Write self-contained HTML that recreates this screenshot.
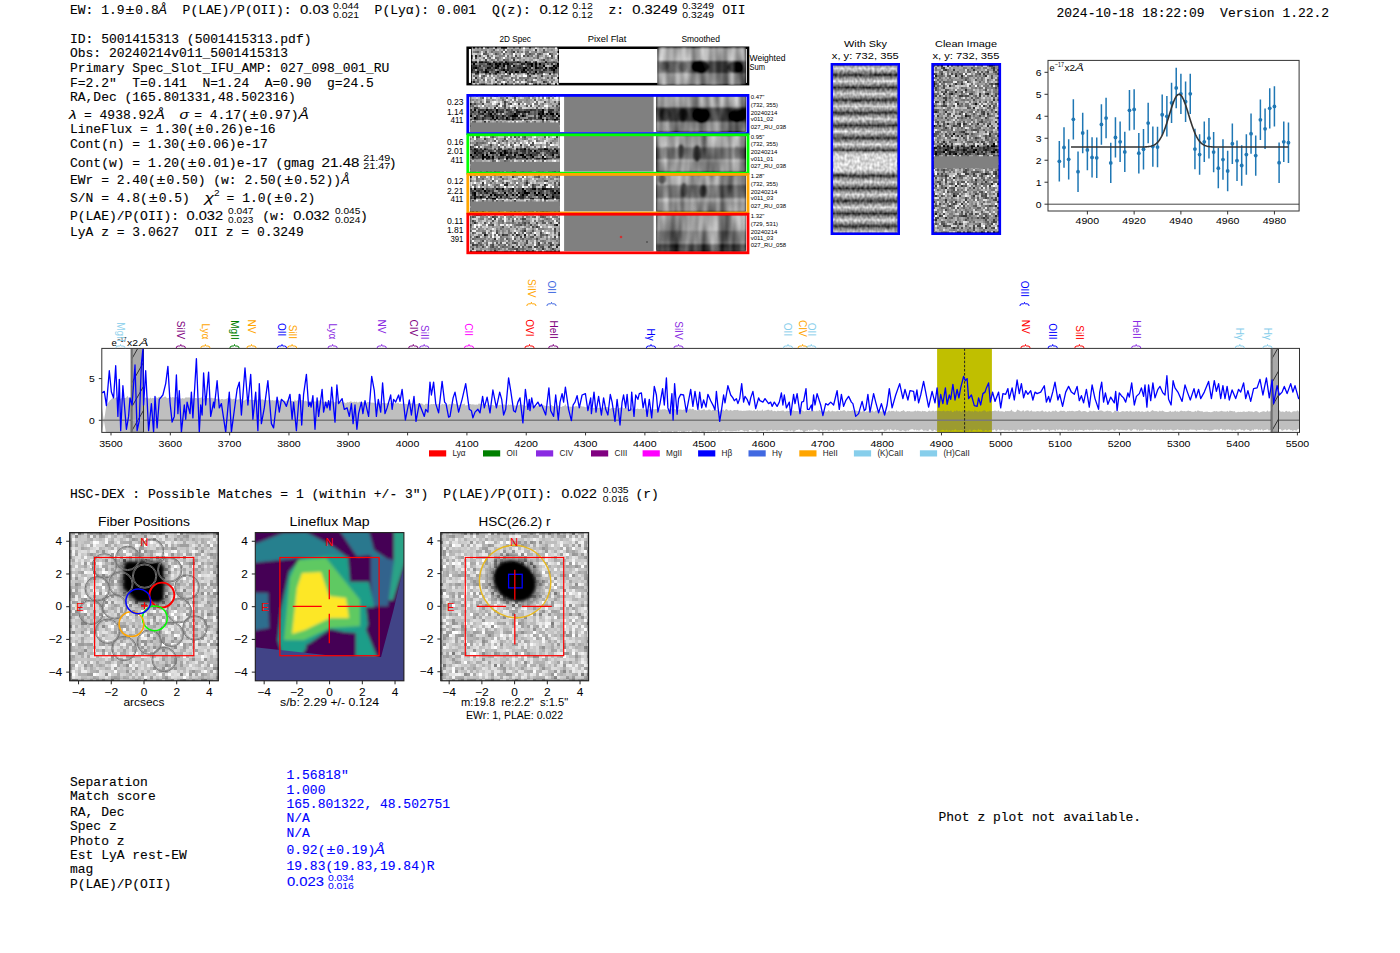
<!DOCTYPE html><html><head><meta charset="utf-8"><style>html,body{margin:0;padding:0;background:#fff;overflow:hidden}svg{display:block}text{white-space:pre}</style></head><body>
<svg width="1400" height="953" viewBox="0 0 1400 953">
<rect width="1400" height="953" fill="#fff"/>
<text x="70.00" y="14.10" font-family='"Liberation Mono", monospace' font-size="13.5" fill="#000" stroke="#000" stroke-width="0.12" textLength="54.53" lengthAdjust="spacingAndGlyphs" >EW: 1.9</text>
<text x="125.73" y="14.10" font-family='"Liberation Sans", sans-serif' font-size="13.5" fill="#000" text-anchor="start" textLength="8.44" lengthAdjust="spacingAndGlyphs" stroke="#000" stroke-width="0.10">±</text>
<text x="135.37" y="14.10" font-family='"Liberation Mono", monospace' font-size="13.5" fill="#000" stroke="#000" stroke-width="0.12" textLength="23.37" lengthAdjust="spacingAndGlyphs" >0.8</text>
<text x="158.20" y="14.10" font-family='"Liberation Sans", sans-serif' font-size="13.5" fill="#000" text-anchor="start" textLength="8.70" lengthAdjust="spacingAndGlyphs" font-style="italic" stroke="#000" stroke-width="0.10">Å</text>
<text x="182.60" y="14.10" font-family='"Liberation Mono", monospace' font-size="13.5" fill="#000" stroke="#000" stroke-width="0.12" textLength="109.06" lengthAdjust="spacingAndGlyphs" >P(LAE)/P(OII):</text>
<text x="300.10" y="14.10" font-family='"Liberation Sans", sans-serif' font-size="13.5" fill="#000" text-anchor="start" textLength="28.90" lengthAdjust="spacingAndGlyphs" stroke="#000" stroke-width="0.10">0.03</text>
<text x="333.00" y="8.70" font-family='"Liberation Sans", sans-serif' font-size="8.8" fill="#000" text-anchor="start" textLength="26.00" lengthAdjust="spacingAndGlyphs" >0.044</text>
<text x="333.00" y="17.50" font-family='"Liberation Sans", sans-serif' font-size="8.8" fill="#000" text-anchor="start" textLength="26.00" lengthAdjust="spacingAndGlyphs" >0.021</text>
<text x="374.60" y="14.10" font-family='"Liberation Mono", monospace' font-size="13.5" fill="#000" stroke="#000" stroke-width="0.12" textLength="54.53" lengthAdjust="spacingAndGlyphs" >P(Lyα):</text>
<text x="437.20" y="14.10" font-family='"Liberation Mono", monospace' font-size="13.5" fill="#000" stroke="#000" stroke-width="0.12" textLength="38.95" lengthAdjust="spacingAndGlyphs" >0.001</text>
<text x="491.90" y="14.10" font-family='"Liberation Mono", monospace' font-size="13.5" fill="#000" stroke="#000" stroke-width="0.12" textLength="38.95" lengthAdjust="spacingAndGlyphs" >Q(z):</text>
<text x="539.40" y="14.10" font-family='"Liberation Sans", sans-serif' font-size="13.5" fill="#000" text-anchor="start" textLength="28.90" lengthAdjust="spacingAndGlyphs" stroke="#000" stroke-width="0.10">0.12</text>
<text x="572.30" y="8.70" font-family='"Liberation Sans", sans-serif' font-size="8.8" fill="#000" text-anchor="start" textLength="20.50" lengthAdjust="spacingAndGlyphs" >0.12</text>
<text x="572.30" y="17.50" font-family='"Liberation Sans", sans-serif' font-size="8.8" fill="#000" text-anchor="start" textLength="20.50" lengthAdjust="spacingAndGlyphs" >0.12</text>
<text x="608.40" y="14.10" font-family='"Liberation Mono", monospace' font-size="13.5" fill="#000" stroke="#000" stroke-width="0.12" textLength="15.58" lengthAdjust="spacingAndGlyphs" >z:</text>
<text x="632.30" y="14.10" font-family='"Liberation Sans", sans-serif' font-size="13.5" fill="#000" text-anchor="start" textLength="45.20" lengthAdjust="spacingAndGlyphs" stroke="#000" stroke-width="0.10">0.3249</text>
<text x="682.30" y="8.70" font-family='"Liberation Sans", sans-serif' font-size="8.8" fill="#000" text-anchor="start" textLength="31.70" lengthAdjust="spacingAndGlyphs" >0.3249</text>
<text x="682.30" y="17.50" font-family='"Liberation Sans", sans-serif' font-size="8.8" fill="#000" text-anchor="start" textLength="31.70" lengthAdjust="spacingAndGlyphs" >0.3249</text>
<text x="722.20" y="14.10" font-family='"Liberation Mono", monospace' font-size="13.5" fill="#000" stroke="#000" stroke-width="0.12" textLength="23.37" lengthAdjust="spacingAndGlyphs" >OII</text>
<text x="1056.50" y="16.50" font-family='"Liberation Mono", monospace' font-size="13.5" fill="#000" stroke="#000" stroke-width="0.12" textLength="272.65" lengthAdjust="spacingAndGlyphs" >2024-10-18 18:22:09  Version 1.22.2</text>
<text x="70.00" y="42.60" font-family='"Liberation Mono", monospace' font-size="13.5" fill="#000" stroke="#000" stroke-width="0.12" textLength="241.49" lengthAdjust="spacingAndGlyphs" >ID: 5001415313 (5001415313.pdf)</text>
<text x="70.00" y="56.50" font-family='"Liberation Mono", monospace' font-size="13.5" fill="#000" stroke="#000" stroke-width="0.12" textLength="218.12" lengthAdjust="spacingAndGlyphs" >Obs: 20240214v011_5001415313</text>
<text x="70.00" y="71.60" font-family='"Liberation Mono", monospace' font-size="13.5" fill="#000" stroke="#000" stroke-width="0.12" textLength="319.39" lengthAdjust="spacingAndGlyphs" >Primary Spec_Slot_IFU_AMP: 027_098_001_RU</text>
<text x="70.00" y="86.70" font-family='"Liberation Mono", monospace' font-size="13.5" fill="#000" stroke="#000" stroke-width="0.12" textLength="303.81" lengthAdjust="spacingAndGlyphs" >F=2.2&quot;  T=0.141  N=1.24  A=0.90  g=24.5</text>
<text x="70.00" y="101.20" font-family='"Liberation Mono", monospace' font-size="13.5" fill="#000" stroke="#000" stroke-width="0.12" textLength="225.91" lengthAdjust="spacingAndGlyphs" >RA,Dec (165.801331,48.502316)</text>
<text x="69.00" y="118.80" font-family='"Liberation Sans", sans-serif' font-size="13.5" fill="#000" text-anchor="start" textLength="7.50" lengthAdjust="spacingAndGlyphs" font-style="italic" stroke="#000" stroke-width="0.10">λ</text>
<text x="76.20" y="118.80" font-family='"Liberation Mono", monospace' font-size="13.5" fill="#000" stroke="#000" stroke-width="0.12" textLength="77.90" lengthAdjust="spacingAndGlyphs" > = 4938.92</text>
<text x="154.40" y="118.80" font-family='"Liberation Sans", sans-serif' font-size="13.5" fill="#000" text-anchor="start" textLength="10.40" lengthAdjust="spacingAndGlyphs" font-style="italic" stroke="#000" stroke-width="0.10">Å</text>
<text x="179.50" y="118.80" font-family='"Liberation Sans", sans-serif' font-size="13.5" fill="#000" text-anchor="start" textLength="9.40" lengthAdjust="spacingAndGlyphs" font-style="italic" stroke="#000" stroke-width="0.10">σ</text>
<text x="186.40" y="118.80" font-family='"Liberation Mono", monospace' font-size="13.5" fill="#000" stroke="#000" stroke-width="0.12" textLength="62.32" lengthAdjust="spacingAndGlyphs" > = 4.17(</text>
<text x="249.92" y="118.80" font-family='"Liberation Sans", sans-serif' font-size="13.5" fill="#000" text-anchor="start" textLength="8.44" lengthAdjust="spacingAndGlyphs" stroke="#000" stroke-width="0.10">±</text>
<text x="259.56" y="118.80" font-family='"Liberation Mono", monospace' font-size="13.5" fill="#000" stroke="#000" stroke-width="0.12" textLength="38.95" lengthAdjust="spacingAndGlyphs" >0.97)</text>
<text x="298.40" y="118.80" font-family='"Liberation Sans", sans-serif' font-size="13.5" fill="#000" text-anchor="start" textLength="10.30" lengthAdjust="spacingAndGlyphs" font-style="italic" stroke="#000" stroke-width="0.10">Å</text>
<text x="70.00" y="133.40" font-family='"Liberation Mono", monospace' font-size="13.5" fill="#000" stroke="#000" stroke-width="0.12" textLength="124.64" lengthAdjust="spacingAndGlyphs" >LineFlux = 1.30(</text>
<text x="195.84" y="133.40" font-family='"Liberation Sans", sans-serif' font-size="13.5" fill="#000" text-anchor="start" textLength="8.44" lengthAdjust="spacingAndGlyphs" stroke="#000" stroke-width="0.10">±</text>
<text x="205.48" y="133.40" font-family='"Liberation Mono", monospace' font-size="13.5" fill="#000" stroke="#000" stroke-width="0.12" textLength="70.11" lengthAdjust="spacingAndGlyphs" >0.26)e-16</text>
<text x="70.00" y="148.20" font-family='"Liberation Mono", monospace' font-size="13.5" fill="#000" stroke="#000" stroke-width="0.12" textLength="116.85" lengthAdjust="spacingAndGlyphs" >Cont(n) = 1.30(</text>
<text x="188.05" y="148.20" font-family='"Liberation Sans", sans-serif' font-size="13.5" fill="#000" text-anchor="start" textLength="8.44" lengthAdjust="spacingAndGlyphs" stroke="#000" stroke-width="0.10">±</text>
<text x="197.69" y="148.20" font-family='"Liberation Mono", monospace' font-size="13.5" fill="#000" stroke="#000" stroke-width="0.12" textLength="70.11" lengthAdjust="spacingAndGlyphs" >0.06)e-17</text>
<text x="70.00" y="166.60" font-family='"Liberation Mono", monospace' font-size="13.5" fill="#000" stroke="#000" stroke-width="0.12" textLength="116.85" lengthAdjust="spacingAndGlyphs" >Cont(w) = 1.20(</text>
<text x="188.05" y="166.60" font-family='"Liberation Sans", sans-serif' font-size="13.5" fill="#000" text-anchor="start" textLength="8.44" lengthAdjust="spacingAndGlyphs" stroke="#000" stroke-width="0.10">±</text>
<text x="197.69" y="166.60" font-family='"Liberation Mono", monospace' font-size="13.5" fill="#000" stroke="#000" stroke-width="0.12" textLength="124.64" lengthAdjust="spacingAndGlyphs" >0.01)e-17 (gmag </text>
<text x="321.60" y="166.60" font-family='"Liberation Sans", sans-serif' font-size="13.5" fill="#000" text-anchor="start" textLength="37.90" lengthAdjust="spacingAndGlyphs" stroke="#000" stroke-width="0.10">21.48</text>
<text x="363.20" y="161.30" font-family='"Liberation Sans", sans-serif' font-size="8.8" fill="#000" text-anchor="start" textLength="27.00" lengthAdjust="spacingAndGlyphs" >21.49</text>
<text x="363.20" y="169.40" font-family='"Liberation Sans", sans-serif' font-size="8.8" fill="#000" text-anchor="start" textLength="27.00" lengthAdjust="spacingAndGlyphs" >21.47</text>
<text x="388.80" y="166.60" font-family='"Liberation Mono", monospace' font-size="13.5" fill="#000" stroke="#000" stroke-width="0.12" textLength="7.79" lengthAdjust="spacingAndGlyphs" >)</text>
<text x="70.00" y="184.30" font-family='"Liberation Mono", monospace' font-size="13.5" fill="#000" stroke="#000" stroke-width="0.12" textLength="85.69" lengthAdjust="spacingAndGlyphs" >EWr = 2.40(</text>
<text x="156.89" y="184.30" font-family='"Liberation Sans", sans-serif' font-size="13.5" fill="#000" text-anchor="start" textLength="8.44" lengthAdjust="spacingAndGlyphs" stroke="#000" stroke-width="0.10">±</text>
<text x="166.53" y="184.30" font-family='"Liberation Mono", monospace' font-size="13.5" fill="#000" stroke="#000" stroke-width="0.12" textLength="116.85" lengthAdjust="spacingAndGlyphs" >0.50) (w: 2.50(</text>
<text x="284.58" y="184.30" font-family='"Liberation Sans", sans-serif' font-size="13.5" fill="#000" text-anchor="start" textLength="8.44" lengthAdjust="spacingAndGlyphs" stroke="#000" stroke-width="0.10">±</text>
<text x="294.22" y="184.30" font-family='"Liberation Mono", monospace' font-size="13.5" fill="#000" stroke="#000" stroke-width="0.12" textLength="46.74" lengthAdjust="spacingAndGlyphs" >0.52))</text>
<text x="341.20" y="184.30" font-family='"Liberation Sans", sans-serif' font-size="13.5" fill="#000" text-anchor="start" textLength="8.40" lengthAdjust="spacingAndGlyphs" font-style="italic" stroke="#000" stroke-width="0.10">Å</text>
<text x="70.00" y="202.00" font-family='"Liberation Mono", monospace' font-size="13.5" fill="#000" stroke="#000" stroke-width="0.12" textLength="77.90" lengthAdjust="spacingAndGlyphs" >S/N = 4.8(</text>
<text x="149.10" y="202.00" font-family='"Liberation Sans", sans-serif' font-size="13.5" fill="#000" text-anchor="start" textLength="8.44" lengthAdjust="spacingAndGlyphs" stroke="#000" stroke-width="0.10">±</text>
<text x="158.74" y="202.00" font-family='"Liberation Mono", monospace' font-size="13.5" fill="#000" stroke="#000" stroke-width="0.12" textLength="46.74" lengthAdjust="spacingAndGlyphs" >0.5)  </text>
<text x="204.60" y="202.00" font-family='"Liberation Sans", sans-serif' font-size="13.5" fill="#000" text-anchor="start" textLength="9.40" lengthAdjust="spacingAndGlyphs" font-style="italic" stroke="#000" stroke-width="0.10">χ</text>
<text x="213.90" y="196.00" font-family='"Liberation Sans", sans-serif' font-size="8.8" fill="#000" text-anchor="start" textLength="5.60" lengthAdjust="spacingAndGlyphs" >2</text>
<text x="218.80" y="202.00" font-family='"Liberation Mono", monospace' font-size="13.5" fill="#000" stroke="#000" stroke-width="0.12" textLength="54.53" lengthAdjust="spacingAndGlyphs" > = 1.0(</text>
<text x="274.53" y="202.00" font-family='"Liberation Sans", sans-serif' font-size="13.5" fill="#000" text-anchor="start" textLength="8.44" lengthAdjust="spacingAndGlyphs" stroke="#000" stroke-width="0.10">±</text>
<text x="284.17" y="202.00" font-family='"Liberation Mono", monospace' font-size="13.5" fill="#000" stroke="#000" stroke-width="0.12" textLength="31.16" lengthAdjust="spacingAndGlyphs" >0.2)</text>
<text x="70.00" y="219.70" font-family='"Liberation Mono", monospace' font-size="13.5" fill="#000" stroke="#000" stroke-width="0.12" textLength="116.85" lengthAdjust="spacingAndGlyphs" >P(LAE)/P(OII): </text>
<text x="186.50" y="219.70" font-family='"Liberation Sans", sans-serif' font-size="13.5" fill="#000" text-anchor="start" textLength="36.60" lengthAdjust="spacingAndGlyphs" stroke="#000" stroke-width="0.10">0.032</text>
<text x="228.10" y="214.40" font-family='"Liberation Sans", sans-serif' font-size="8.8" fill="#000" text-anchor="start" textLength="25.40" lengthAdjust="spacingAndGlyphs" >0.047</text>
<text x="228.10" y="223.00" font-family='"Liberation Sans", sans-serif' font-size="8.8" fill="#000" text-anchor="start" textLength="25.40" lengthAdjust="spacingAndGlyphs" >0.023</text>
<text x="262.30" y="219.70" font-family='"Liberation Mono", monospace' font-size="13.5" fill="#000" stroke="#000" stroke-width="0.12" textLength="31.16" lengthAdjust="spacingAndGlyphs" >(w: </text>
<text x="293.30" y="219.70" font-family='"Liberation Sans", sans-serif' font-size="13.5" fill="#000" text-anchor="start" textLength="36.40" lengthAdjust="spacingAndGlyphs" stroke="#000" stroke-width="0.10">0.032</text>
<text x="335.00" y="214.40" font-family='"Liberation Sans", sans-serif' font-size="8.8" fill="#000" text-anchor="start" textLength="25.30" lengthAdjust="spacingAndGlyphs" >0.045</text>
<text x="335.00" y="223.00" font-family='"Liberation Sans", sans-serif' font-size="8.8" fill="#000" text-anchor="start" textLength="25.30" lengthAdjust="spacingAndGlyphs" >0.024</text>
<text x="360.00" y="219.70" font-family='"Liberation Mono", monospace' font-size="13.5" fill="#000" stroke="#000" stroke-width="0.12" textLength="7.79" lengthAdjust="spacingAndGlyphs" >)</text>
<text x="70.00" y="236.00" font-family='"Liberation Mono", monospace' font-size="13.5" fill="#000" stroke="#000" stroke-width="0.12" textLength="233.70" lengthAdjust="spacingAndGlyphs" >LyA z = 3.0627  OII z = 0.3249</text>
<text x="70.00" y="498.40" font-family='"Liberation Mono", monospace' font-size="13.5" fill="#000" stroke="#000" stroke-width="0.12" textLength="358.34" lengthAdjust="spacingAndGlyphs" >HSC-DEX : Possible Matches = 1 (within +/- 3&quot;)</text>
<text x="443.30" y="498.40" font-family='"Liberation Mono", monospace' font-size="13.5" fill="#000" stroke="#000" stroke-width="0.12" textLength="109.06" lengthAdjust="spacingAndGlyphs" >P(LAE)/P(OII):</text>
<text x="561.60" y="498.40" font-family='"Liberation Sans", sans-serif' font-size="13.5" fill="#000" text-anchor="start" textLength="35.10" lengthAdjust="spacingAndGlyphs" stroke="#000" stroke-width="0.10">0.022</text>
<text x="602.80" y="493.20" font-family='"Liberation Sans", sans-serif' font-size="8.8" fill="#000" text-anchor="start" textLength="25.80" lengthAdjust="spacingAndGlyphs" >0.035</text>
<text x="602.80" y="501.60" font-family='"Liberation Sans", sans-serif' font-size="8.8" fill="#000" text-anchor="start" textLength="25.80" lengthAdjust="spacingAndGlyphs" >0.016</text>
<text x="635.40" y="498.40" font-family='"Liberation Mono", monospace' font-size="13.5" fill="#000" stroke="#000" stroke-width="0.12" textLength="23.37" lengthAdjust="spacingAndGlyphs" >(r)</text>
<text x="70.00" y="785.70" font-family='"Liberation Mono", monospace' font-size="13.5" fill="#000" stroke="#000" stroke-width="0.12" textLength="77.90" lengthAdjust="spacingAndGlyphs" >Separation</text>
<text x="70.00" y="800.40" font-family='"Liberation Mono", monospace' font-size="13.5" fill="#000" stroke="#000" stroke-width="0.12" textLength="85.69" lengthAdjust="spacingAndGlyphs" >Match score</text>
<text x="70.00" y="815.50" font-family='"Liberation Mono", monospace' font-size="13.5" fill="#000" stroke="#000" stroke-width="0.12" textLength="54.53" lengthAdjust="spacingAndGlyphs" >RA, Dec</text>
<text x="70.00" y="829.80" font-family='"Liberation Mono", monospace' font-size="13.5" fill="#000" stroke="#000" stroke-width="0.12" textLength="46.74" lengthAdjust="spacingAndGlyphs" >Spec z</text>
<text x="70.00" y="844.50" font-family='"Liberation Mono", monospace' font-size="13.5" fill="#000" stroke="#000" stroke-width="0.12" textLength="54.53" lengthAdjust="spacingAndGlyphs" >Photo z</text>
<text x="70.00" y="858.70" font-family='"Liberation Mono", monospace' font-size="13.5" fill="#000" stroke="#000" stroke-width="0.12" textLength="116.85" lengthAdjust="spacingAndGlyphs" >Est LyA rest-EW</text>
<text x="70.00" y="873.10" font-family='"Liberation Mono", monospace' font-size="13.5" fill="#000" stroke="#000" stroke-width="0.12" textLength="23.37" lengthAdjust="spacingAndGlyphs" >mag</text>
<text x="70.00" y="887.80" font-family='"Liberation Mono", monospace' font-size="13.5" fill="#000" stroke="#000" stroke-width="0.12" textLength="101.27" lengthAdjust="spacingAndGlyphs" >P(LAE)/P(OII)</text>
<text x="286.50" y="779.10" font-family='"Liberation Mono", monospace' font-size="13.5" fill="#0000ff" stroke="#0000ff" stroke-width="0.12" textLength="62.32" lengthAdjust="spacingAndGlyphs" >1.56818&quot;</text>
<text x="286.50" y="793.50" font-family='"Liberation Mono", monospace' font-size="13.5" fill="#0000ff" stroke="#0000ff" stroke-width="0.12" textLength="38.95" lengthAdjust="spacingAndGlyphs" >1.000</text>
<text x="286.50" y="808.20" font-family='"Liberation Mono", monospace' font-size="13.5" fill="#0000ff" stroke="#0000ff" stroke-width="0.12" textLength="163.59" lengthAdjust="spacingAndGlyphs" >165.801322, 48.502751</text>
<text x="286.50" y="822.40" font-family='"Liberation Mono", monospace' font-size="13.5" fill="#0000ff" stroke="#0000ff" stroke-width="0.12" textLength="23.37" lengthAdjust="spacingAndGlyphs" >N/A</text>
<text x="286.50" y="837.40" font-family='"Liberation Mono", monospace' font-size="13.5" fill="#0000ff" stroke="#0000ff" stroke-width="0.12" textLength="23.37" lengthAdjust="spacingAndGlyphs" >N/A</text>
<text x="286.50" y="869.50" font-family='"Liberation Mono", monospace' font-size="13.5" fill="#0000ff" stroke="#0000ff" stroke-width="0.12" textLength="148.01" lengthAdjust="spacingAndGlyphs" >19.83(19.83,19.84)R</text>
<text x="286.50" y="854.00" font-family='"Liberation Mono", monospace' font-size="13.5" fill="#0000ff" stroke="#0000ff" stroke-width="0.12" textLength="38.95" lengthAdjust="spacingAndGlyphs" >0.92(</text>
<text x="326.65" y="854.00" font-family='"Liberation Sans", sans-serif' font-size="13.5" fill="#0000ff" text-anchor="start" textLength="8.44" lengthAdjust="spacingAndGlyphs" stroke="#0000ff" stroke-width="0.10">±</text>
<text x="336.29" y="854.00" font-family='"Liberation Mono", monospace' font-size="13.5" fill="#0000ff" stroke="#0000ff" stroke-width="0.12" textLength="38.95" lengthAdjust="spacingAndGlyphs" >0.19)</text>
<text x="374.40" y="854.00" font-family='"Liberation Sans", sans-serif' font-size="13.5" fill="#0000ff" text-anchor="start" textLength="10.50" lengthAdjust="spacingAndGlyphs" font-style="italic" stroke="#0000ff" stroke-width="0.10">Å</text>
<text x="286.90" y="886.40" font-family='"Liberation Sans", sans-serif' font-size="13.5" fill="#0000ff" text-anchor="start" textLength="37.00" lengthAdjust="spacingAndGlyphs" stroke="#0000ff" stroke-width="0.10">0.023</text>
<text x="327.90" y="880.50" font-family='"Liberation Sans", sans-serif' font-size="8.8" fill="#0000ff" text-anchor="start" textLength="26.00" lengthAdjust="spacingAndGlyphs" >0.034</text>
<text x="327.90" y="889.00" font-family='"Liberation Sans", sans-serif' font-size="8.8" fill="#0000ff" text-anchor="start" textLength="26.00" lengthAdjust="spacingAndGlyphs" >0.016</text>
<text x="938.50" y="821.00" font-family='"Liberation Mono", monospace' font-size="13.5" fill="#000" stroke="#000" stroke-width="0.12" textLength="202.54" lengthAdjust="spacingAndGlyphs" >Phot z plot not available.</text>
<defs>
<filter id="fw2d" filterUnits="userSpaceOnUse" x="471.9" y="47.5" width="86.4" height="37" color-interpolation-filters="sRGB"><feOffset in="SourceGraphic" dx="0" dy="0" result="s"/><feTurbulence type="fractalNoise" baseFrequency="0.9" numOctaves="1" seed="3" result="t"/><feColorMatrix in="t" type="matrix" values="1 0 0 0 0  1 0 0 0 0  1 0 0 0 0  0 0 0 0 1" result="g"/><feFlood x="471" y="47" width="1" height="1" flood-color="#000" result="f"/><feComposite in="f" in2="f" operator="over" x="471" y="47" width="2" height="2" result="fc"/><feTile in="fc" result="tile"/><feComposite in="g" in2="tile" operator="in" result="samp"/><feConvolveMatrix in="samp" order="2" kernelMatrix="1 1 1 1" divisor="1" targetX="1" targetY="1" edgeMode="none" result="blk"/><feComposite in="s" in2="blk" operator="arithmetic" k1="0" k2="1" k3="1.8" k4="-0.900"/></filter>
<filter id="fwsm" filterUnits="userSpaceOnUse" x="657.9" y="47.5" width="87.8" height="37" color-interpolation-filters="sRGB"><feGaussianBlur in="SourceGraphic" stdDeviation="1.2" result="s"/><feTurbulence type="fractalNoise" baseFrequency="0.1 0.02" numOctaves="2" seed="5" result="t"/><feColorMatrix in="t" type="matrix" values="1 0 0 0 0  1 0 0 0 0  1 0 0 0 0  0 0 0 0 1" result="g"/><feComposite in="s" in2="g" operator="arithmetic" k1="0" k2="1" k3="0.75" k4="-0.375"/></filter>
<filter id="f2d0" filterUnits="userSpaceOnUse" x="470.3" y="95.4" width="89.5" height="36.60000000000001" color-interpolation-filters="sRGB"><feOffset in="SourceGraphic" dx="0" dy="0" result="s"/><feTurbulence type="fractalNoise" baseFrequency="0.9" numOctaves="1" seed="11" result="t"/><feColorMatrix in="t" type="matrix" values="1 0 0 0 0  1 0 0 0 0  1 0 0 0 0  0 0 0 0 1" result="g"/><feFlood x="470" y="95" width="1" height="1" flood-color="#000" result="f"/><feComposite in="f" in2="f" operator="over" x="470" y="95" width="2" height="2" result="fc"/><feTile in="fc" result="tile"/><feComposite in="g" in2="tile" operator="in" result="samp"/><feConvolveMatrix in="samp" order="2" kernelMatrix="1 1 1 1" divisor="1" targetX="1" targetY="1" edgeMode="none" result="blk"/><feComposite in="s" in2="blk" operator="arithmetic" k1="0" k2="1" k3="1.8" k4="-0.900"/></filter>
<filter id="fsm0" filterUnits="userSpaceOnUse" x="656.4" y="95.4" width="89.6" height="36.60000000000001" color-interpolation-filters="sRGB"><feGaussianBlur in="SourceGraphic" stdDeviation="1.2" result="s"/><feTurbulence type="fractalNoise" baseFrequency="0.1 0.02" numOctaves="2" seed="21" result="t"/><feColorMatrix in="t" type="matrix" values="1 0 0 0 0  1 0 0 0 0  1 0 0 0 0  0 0 0 0 1" result="g"/><feComposite in="s" in2="g" operator="arithmetic" k1="0" k2="1" k3="0.8" k4="-0.400"/></filter>
<filter id="f2d1" filterUnits="userSpaceOnUse" x="470.3" y="134.8" width="89.5" height="36.8" color-interpolation-filters="sRGB"><feOffset in="SourceGraphic" dx="0" dy="0" result="s"/><feTurbulence type="fractalNoise" baseFrequency="0.9" numOctaves="1" seed="12" result="t"/><feColorMatrix in="t" type="matrix" values="1 0 0 0 0  1 0 0 0 0  1 0 0 0 0  0 0 0 0 1" result="g"/><feFlood x="470" y="134" width="1" height="1" flood-color="#000" result="f"/><feComposite in="f" in2="f" operator="over" x="470" y="134" width="2" height="2" result="fc"/><feTile in="fc" result="tile"/><feComposite in="g" in2="tile" operator="in" result="samp"/><feConvolveMatrix in="samp" order="2" kernelMatrix="1 1 1 1" divisor="1" targetX="1" targetY="1" edgeMode="none" result="blk"/><feComposite in="s" in2="blk" operator="arithmetic" k1="0" k2="1" k3="1.8" k4="-0.900"/></filter>
<filter id="fsm1" filterUnits="userSpaceOnUse" x="656.4" y="134.8" width="89.6" height="36.8" color-interpolation-filters="sRGB"><feGaussianBlur in="SourceGraphic" stdDeviation="1.2" result="s"/><feTurbulence type="fractalNoise" baseFrequency="0.1 0.02" numOctaves="2" seed="22" result="t"/><feColorMatrix in="t" type="matrix" values="1 0 0 0 0  1 0 0 0 0  1 0 0 0 0  0 0 0 0 1" result="g"/><feComposite in="s" in2="g" operator="arithmetic" k1="0" k2="1" k3="0.8" k4="-0.400"/></filter>
<filter id="f2d2" filterUnits="userSpaceOnUse" x="470.3" y="174.4" width="89.5" height="37.000000000000014" color-interpolation-filters="sRGB"><feOffset in="SourceGraphic" dx="0" dy="0" result="s"/><feTurbulence type="fractalNoise" baseFrequency="0.9" numOctaves="1" seed="13" result="t"/><feColorMatrix in="t" type="matrix" values="1 0 0 0 0  1 0 0 0 0  1 0 0 0 0  0 0 0 0 1" result="g"/><feFlood x="470" y="174" width="1" height="1" flood-color="#000" result="f"/><feComposite in="f" in2="f" operator="over" x="470" y="174" width="2" height="2" result="fc"/><feTile in="fc" result="tile"/><feComposite in="g" in2="tile" operator="in" result="samp"/><feConvolveMatrix in="samp" order="2" kernelMatrix="1 1 1 1" divisor="1" targetX="1" targetY="1" edgeMode="none" result="blk"/><feComposite in="s" in2="blk" operator="arithmetic" k1="0" k2="1" k3="1.8" k4="-0.900"/></filter>
<filter id="fsm2" filterUnits="userSpaceOnUse" x="656.4" y="174.4" width="89.6" height="37.000000000000014" color-interpolation-filters="sRGB"><feGaussianBlur in="SourceGraphic" stdDeviation="1.2" result="s"/><feTurbulence type="fractalNoise" baseFrequency="0.1 0.02" numOctaves="2" seed="23" result="t"/><feColorMatrix in="t" type="matrix" values="1 0 0 0 0  1 0 0 0 0  1 0 0 0 0  0 0 0 0 1" result="g"/><feComposite in="s" in2="g" operator="arithmetic" k1="0" k2="1" k3="0.8" k4="-0.400"/></filter>
<filter id="f2d3" filterUnits="userSpaceOnUse" x="470.3" y="214.20000000000002" width="89.5" height="36.999999999999986" color-interpolation-filters="sRGB"><feOffset in="SourceGraphic" dx="0" dy="0" result="s"/><feTurbulence type="fractalNoise" baseFrequency="0.9" numOctaves="1" seed="14" result="t"/><feColorMatrix in="t" type="matrix" values="1 0 0 0 0  1 0 0 0 0  1 0 0 0 0  0 0 0 0 1" result="g"/><feFlood x="470" y="214" width="1" height="1" flood-color="#000" result="f"/><feComposite in="f" in2="f" operator="over" x="470" y="214" width="2" height="2" result="fc"/><feTile in="fc" result="tile"/><feComposite in="g" in2="tile" operator="in" result="samp"/><feConvolveMatrix in="samp" order="2" kernelMatrix="1 1 1 1" divisor="1" targetX="1" targetY="1" edgeMode="none" result="blk"/><feComposite in="s" in2="blk" operator="arithmetic" k1="0" k2="1" k3="1.8" k4="-0.900"/></filter>
<filter id="fsm3" filterUnits="userSpaceOnUse" x="656.4" y="214.20000000000002" width="89.6" height="36.999999999999986" color-interpolation-filters="sRGB"><feGaussianBlur in="SourceGraphic" stdDeviation="1.2" result="s"/><feTurbulence type="fractalNoise" baseFrequency="0.1 0.02" numOctaves="2" seed="24" result="t"/><feColorMatrix in="t" type="matrix" values="1 0 0 0 0  1 0 0 0 0  1 0 0 0 0  0 0 0 0 1" result="g"/><feComposite in="s" in2="g" operator="arithmetic" k1="0" k2="1" k3="0.8" k4="-0.400"/></filter>
</defs>
<text x="515.20" y="41.80" font-family='"Liberation Sans", sans-serif' font-size="8.6" fill="#000" text-anchor="middle" textLength="31.50" lengthAdjust="spacingAndGlyphs" >2D Spec</text>
<text x="607.00" y="41.80" font-family='"Liberation Sans", sans-serif' font-size="8.6" fill="#000" text-anchor="middle" textLength="38.50" lengthAdjust="spacingAndGlyphs" >Pixel Flat</text>
<text x="700.70" y="41.80" font-family='"Liberation Sans", sans-serif' font-size="8.6" fill="#000" text-anchor="middle" textLength="38.50" lengthAdjust="spacingAndGlyphs" >Smoothed</text>
<rect x="467.65" y="47.75" width="280.4" height="36.4" fill="#fff" stroke="#000" stroke-width="2.5"/>
<g filter="url(#fw2d)"><rect x="471.9" y="47.5" width="86.4" height="37" fill="#9a9a9a"/><rect x="471.9" y="61.5" width="86.4" height="12" fill="#4a4a4a"/></g>
<g filter="url(#fwsm)"><rect x="657.9" y="47.5" width="87.8" height="37" fill="#a8a8a8"/><rect x="657.9" y="70" width="87.8" height="15" fill="#8a8a8a"/><rect x="657.9" y="61" width="87.8" height="12" fill="#505050"/><ellipse cx="700.5" cy="66.8" rx="8.5" ry="6" fill="#000"/><ellipse cx="735" cy="67" rx="7.5" ry="5.5" fill="#111"/><ellipse cx="664" cy="66" rx="5" ry="4.5" fill="#333"/><ellipse cx="683" cy="67" rx="4.5" ry="4.5" fill="#333"/></g>
<text x="749.50" y="61.40" font-family='"Liberation Sans", sans-serif' font-size="9.2" fill="#000" text-anchor="start" textLength="36.00" lengthAdjust="spacingAndGlyphs" >Weighted</text>
<text x="749.50" y="70.30" font-family='"Liberation Sans", sans-serif' font-size="9.2" fill="#000" text-anchor="start" textLength="15.50" lengthAdjust="spacingAndGlyphs" >Sum</text>
<g filter="url(#f2d0)"><rect x="470.3" y="95.4" width="89.5" height="36.60000000000001" fill="#a2a2a2"/><rect x="470.3" y="109.0" width="89.5" height="11" fill="#484848"/></g>
<rect x="470.3" y="122.5" width="89.5" height="9.500000000000005" fill="#808080"/>
<rect x="564.1" y="95.4" width="89.5" height="36.60000000000001" fill="#808080"/>
<g filter="url(#fsm0)"><rect x="656.4" y="95.4" width="89.6" height="36.6" fill="#a0a0a0"/><rect x="656.4" y="121" width="89.6" height="11" fill="#858585"/><rect x="656.4" y="107.5" width="89.6" height="14" fill="#404040"/><ellipse cx="701.5" cy="115.5" rx="8.5" ry="7" fill="#000"/><ellipse cx="737" cy="115.5" rx="7.5" ry="6" fill="#000"/><ellipse cx="665" cy="114.5" rx="5.5" ry="6.5" fill="#222"/><ellipse cx="683" cy="115" rx="5" ry="6.5" fill="#222"/></g>
<rect x="467.8" y="95.40" width="280.2" height="38.20" fill="none" stroke="#0000ff" stroke-width="2.8"/>
<text x="463.40" y="105.40" font-family='"Liberation Sans", sans-serif' font-size="8.6" fill="#000" text-anchor="end" textLength="16.50" lengthAdjust="spacingAndGlyphs" >0.23</text>
<text x="463.40" y="114.60" font-family='"Liberation Sans", sans-serif' font-size="8.6" fill="#000" text-anchor="end" textLength="16.50" lengthAdjust="spacingAndGlyphs" >1.14</text>
<text x="463.40" y="123.20" font-family='"Liberation Sans", sans-serif' font-size="8.6" fill="#000" text-anchor="end" textLength="13.00" lengthAdjust="spacingAndGlyphs" >411</text>
<text x="750.70" y="99.30" font-family='"Liberation Sans", sans-serif' font-size="6.0" fill="#000" text-anchor="start" >0.47&quot;</text>
<text x="750.70" y="107.00" font-family='"Liberation Sans", sans-serif' font-size="6.0" fill="#000" text-anchor="start" >(732, 355)</text>
<text x="750.70" y="115.00" font-family='"Liberation Sans", sans-serif' font-size="6.0" fill="#000" text-anchor="start" >20240214</text>
<text x="750.70" y="121.40" font-family='"Liberation Sans", sans-serif' font-size="6.0" fill="#000" text-anchor="start" >v011_02</text>
<text x="750.70" y="128.60" font-family='"Liberation Sans", sans-serif' font-size="6.0" fill="#000" text-anchor="start" >027_RU_038</text>
<g filter="url(#f2d1)"><rect x="470.3" y="134.8" width="89.5" height="36.8" fill="#a2a2a2"/><rect x="470.3" y="148.4" width="89.5" height="11" fill="#484848"/></g>
<rect x="470.3" y="161.9" width="89.5" height="9.699999999999994" fill="#808080"/>
<rect x="564.1" y="134.8" width="89.5" height="36.8" fill="#808080"/>
<g filter="url(#fsm1)"><rect x="656.4" y="134.8" width="89.6" height="36.8" fill="#a0a0a0"/><rect x="656.4" y="161.4" width="89.6" height="10.599999999999994" fill="#858585"/><rect x="656.4" y="147.4" width="89.6" height="12" fill="#6a6a6a"/><ellipse cx="697" cy="153.4" rx="4" ry="8" fill="#333"/><ellipse cx="681" cy="151.4" rx="3.5" ry="7" fill="#444"/><ellipse cx="666" cy="152.4" rx="3" ry="6" fill="#555"/><ellipse cx="737" cy="152.4" rx="3" ry="6" fill="#555"/></g>
<rect x="467.8" y="134.80" width="280.2" height="38.40" fill="none" stroke="#00ff00" stroke-width="2.8"/>
<text x="463.40" y="144.80" font-family='"Liberation Sans", sans-serif' font-size="8.6" fill="#000" text-anchor="end" textLength="16.50" lengthAdjust="spacingAndGlyphs" >0.16</text>
<text x="463.40" y="154.00" font-family='"Liberation Sans", sans-serif' font-size="8.6" fill="#000" text-anchor="end" textLength="16.50" lengthAdjust="spacingAndGlyphs" >2.01</text>
<text x="463.40" y="162.60" font-family='"Liberation Sans", sans-serif' font-size="8.6" fill="#000" text-anchor="end" textLength="13.00" lengthAdjust="spacingAndGlyphs" >411</text>
<text x="750.70" y="138.70" font-family='"Liberation Sans", sans-serif' font-size="6.0" fill="#000" text-anchor="start" >0.95&quot;</text>
<text x="750.70" y="146.40" font-family='"Liberation Sans", sans-serif' font-size="6.0" fill="#000" text-anchor="start" >(732, 355)</text>
<text x="750.70" y="154.40" font-family='"Liberation Sans", sans-serif' font-size="6.0" fill="#000" text-anchor="start" >20240214</text>
<text x="750.70" y="160.80" font-family='"Liberation Sans", sans-serif' font-size="6.0" fill="#000" text-anchor="start" >v011_01</text>
<text x="750.70" y="168.00" font-family='"Liberation Sans", sans-serif' font-size="6.0" fill="#000" text-anchor="start" >027_RU_038</text>
<g filter="url(#f2d2)"><rect x="470.3" y="174.4" width="89.5" height="37.000000000000014" fill="#a2a2a2"/><rect x="470.3" y="188.0" width="89.5" height="11" fill="#484848"/></g>
<rect x="470.3" y="201.5" width="89.5" height="9.900000000000011" fill="#808080"/>
<rect x="564.1" y="174.4" width="89.5" height="37.000000000000014" fill="#808080"/>
<g filter="url(#fsm2)"><rect x="656.4" y="174.4" width="89.6" height="37.000000000000014" fill="#9c9c9c"/><rect x="656.4" y="202.0" width="89.6" height="9.800000000000011" fill="#868686"/><rect x="656.4" y="185.0" width="89.6" height="13" fill="#6a6a6a"/><ellipse cx="662" cy="179.0" rx="4" ry="5" fill="#444"/><ellipse cx="684" cy="190.0" rx="3.5" ry="7" fill="#444"/><ellipse cx="703" cy="191.0" rx="4" ry="6" fill="#3a3a3a"/></g>
<rect x="467.8" y="174.40" width="280.2" height="38.60" fill="none" stroke="#ffa500" stroke-width="2.8"/>
<text x="463.40" y="184.40" font-family='"Liberation Sans", sans-serif' font-size="8.6" fill="#000" text-anchor="end" textLength="16.50" lengthAdjust="spacingAndGlyphs" >0.12</text>
<text x="463.40" y="193.60" font-family='"Liberation Sans", sans-serif' font-size="8.6" fill="#000" text-anchor="end" textLength="16.50" lengthAdjust="spacingAndGlyphs" >2.21</text>
<text x="463.40" y="202.20" font-family='"Liberation Sans", sans-serif' font-size="8.6" fill="#000" text-anchor="end" textLength="13.00" lengthAdjust="spacingAndGlyphs" >411</text>
<text x="750.70" y="178.30" font-family='"Liberation Sans", sans-serif' font-size="6.0" fill="#000" text-anchor="start" >1.28&quot;</text>
<text x="750.70" y="186.00" font-family='"Liberation Sans", sans-serif' font-size="6.0" fill="#000" text-anchor="start" >(732, 355)</text>
<text x="750.70" y="194.00" font-family='"Liberation Sans", sans-serif' font-size="6.0" fill="#000" text-anchor="start" >20240214</text>
<text x="750.70" y="200.40" font-family='"Liberation Sans", sans-serif' font-size="6.0" fill="#000" text-anchor="start" >v011_03</text>
<text x="750.70" y="207.60" font-family='"Liberation Sans", sans-serif' font-size="6.0" fill="#000" text-anchor="start" >027_RU_038</text>
<g filter="url(#f2d3)"><rect x="470.3" y="214.20000000000002" width="89.5" height="36.999999999999986" fill="#9a9a9a"/><rect x="470.3" y="243.8" width="89.5" height="7" fill="#888"/></g>
<rect x="564.1" y="214.20000000000002" width="89.5" height="36.999999999999986" fill="#808080"/>
<g filter="url(#fsm3)"><rect x="656.4" y="214.20000000000002" width="89.6" height="36.999999999999986" fill="#a0a0a0"/><rect x="656.4" y="230.8" width="89.6" height="12" fill="#808080"/><rect x="656.4" y="243.8" width="89.6" height="7" fill="#444"/></g>
<rect x="467.8" y="214.20" width="280.2" height="38.60" fill="none" stroke="#ff0000" stroke-width="2.8"/>
<text x="463.40" y="224.20" font-family='"Liberation Sans", sans-serif' font-size="8.6" fill="#000" text-anchor="end" textLength="16.50" lengthAdjust="spacingAndGlyphs" >0.11</text>
<text x="463.40" y="233.40" font-family='"Liberation Sans", sans-serif' font-size="8.6" fill="#000" text-anchor="end" textLength="16.50" lengthAdjust="spacingAndGlyphs" >1.81</text>
<text x="463.40" y="242.00" font-family='"Liberation Sans", sans-serif' font-size="8.6" fill="#000" text-anchor="end" textLength="13.00" lengthAdjust="spacingAndGlyphs" >391</text>
<text x="750.70" y="218.10" font-family='"Liberation Sans", sans-serif' font-size="6.0" fill="#000" text-anchor="start" >1.32&quot;</text>
<text x="750.70" y="225.80" font-family='"Liberation Sans", sans-serif' font-size="6.0" fill="#000" text-anchor="start" >(729, 531)</text>
<text x="750.70" y="233.80" font-family='"Liberation Sans", sans-serif' font-size="6.0" fill="#000" text-anchor="start" >20240214</text>
<text x="750.70" y="240.20" font-family='"Liberation Sans", sans-serif' font-size="6.0" fill="#000" text-anchor="start" >v011_03</text>
<text x="750.70" y="247.40" font-family='"Liberation Sans", sans-serif' font-size="6.0" fill="#000" text-anchor="start" >027_RU_058</text>
<circle cx="621" cy="237" r="1.3" fill="#c33"/><circle cx="647" cy="242" r="0.8" fill="#333"/>
<defs>
<filter id="fsky" filterUnits="userSpaceOnUse" x="833" y="65.5" width="64.5" height="167" color-interpolation-filters="sRGB"><feGaussianBlur in="SourceGraphic" stdDeviation="0.6" result="s"/><feTurbulence type="fractalNoise" baseFrequency="0.4 0.3" numOctaves="1" seed="31" result="t"/><feColorMatrix in="t" type="matrix" values="1 0 0 0 0  1 0 0 0 0  1 0 0 0 0  0 0 0 0 1" result="g"/><feComposite in="s" in2="g" operator="arithmetic" k1="0" k2="1" k3="0.55" k4="-0.275"/></filter>
<filter id="fcln" filterUnits="userSpaceOnUse" x="933.8" y="65.5" width="64.8" height="167" color-interpolation-filters="sRGB"><feOffset in="SourceGraphic" dx="0" dy="0" result="s"/><feTurbulence type="fractalNoise" baseFrequency="0.9" numOctaves="1" seed="41" result="t"/><feColorMatrix in="t" type="matrix" values="1 0 0 0 0  1 0 0 0 0  1 0 0 0 0  0 0 0 0 1" result="g"/><feFlood x="933" y="65" width="1" height="1" flood-color="#000" result="f"/><feComposite in="f" in2="f" operator="over" x="933" y="65" width="2" height="2" result="fc"/><feTile in="fc" result="tile"/><feComposite in="g" in2="tile" operator="in" result="samp"/><feConvolveMatrix in="samp" order="2" kernelMatrix="1 1 1 1" divisor="1" targetX="1" targetY="1" edgeMode="none" result="blk"/><feComposite in="s" in2="blk" operator="arithmetic" k1="0" k2="1" k3="1.6" k4="-0.800"/></filter>
</defs>
<text x="865.50" y="47.00" font-family='"Liberation Sans", sans-serif' font-size="9.8" fill="#000" text-anchor="middle" textLength="43.00" lengthAdjust="spacingAndGlyphs" >With Sky</text>
<text x="865.30" y="58.50" font-family='"Liberation Sans", sans-serif' font-size="9.8" fill="#000" text-anchor="middle" textLength="67.00" lengthAdjust="spacingAndGlyphs" >x, y: 732, 355</text>
<text x="966.00" y="47.00" font-family='"Liberation Sans", sans-serif' font-size="9.8" fill="#000" text-anchor="middle" textLength="62.00" lengthAdjust="spacingAndGlyphs" >Clean Image</text>
<text x="966.00" y="58.50" font-family='"Liberation Sans", sans-serif' font-size="9.8" fill="#000" text-anchor="middle" textLength="67.00" lengthAdjust="spacingAndGlyphs" >x, y: 732, 355</text>
<defs><linearGradient id="gsky" gradientUnits="userSpaceOnUse" x1="0" y1="68.7" x2="0" y2="81.3" spreadMethod="repeat"><stop offset="0" stop-color="#d4d4d4"/><stop offset="0.28" stop-color="#8a8a8a"/><stop offset="0.5" stop-color="#343434"/><stop offset="0.72" stop-color="#8a8a8a"/><stop offset="1" stop-color="#d4d4d4"/></linearGradient><linearGradient id="gskyb" x1="0" y1="0" x2="0" y2="1"><stop offset="0" stop-color="#d8d8d8" stop-opacity="0"/><stop offset="0.2" stop-color="#d8d8d8"/><stop offset="0.8" stop-color="#d8d8d8"/><stop offset="1" stop-color="#d8d8d8" stop-opacity="0"/></linearGradient></defs>
<g filter="url(#fsky)"><rect x="833" y="65.5" width="64.5" height="167" fill="url(#gsky)"/><rect x="833" y="150" width="64.5" height="24" fill="url(#gskyb)"/></g>
<g filter="url(#fcln)"><rect x="933.8" y="65.5" width="64.8" height="167" fill="#8e8e8e"/><rect x="933.8" y="145.5" width="64.8" height="9.5" fill="#4a4a4a"/></g>
<rect x="933.8" y="156.3" width="64.8" height="12.2" fill="#808080"/>
<rect x="831.85" y="64.25" width="66.9" height="169.5" fill="none" stroke="#0000ff" stroke-width="2.5"/>
<rect x="932.55" y="64.25" width="67.3" height="169.5" fill="none" stroke="#0000ff" stroke-width="2.5"/>
<line x1="1048.0" y1="204.2" x2="1299.1" y2="204.2" stroke="#444" stroke-width="1"/>
<path d="M1059.32 141.12V181.56M1064.00 127.27V167.71M1068.68 139.14V179.58M1073.35 99.14V139.58M1078.03 151.45V191.89M1082.70 112.76V153.21M1087.38 129.69V170.13M1092.06 137.16V177.60M1096.73 137.60V178.04M1101.41 104.19V144.63M1106.08 97.82V138.26M1110.76 142.66V183.10M1115.44 117.16V157.60M1120.11 121.56V162.00M1124.79 131.67V172.11M1129.46 90.12V130.57M1134.14 89.24V129.69M1138.82 132.98V173.43M1143.49 129.03V169.47M1148.17 102.87V143.32M1152.84 126.39V166.83M1157.52 126.83V167.27M1162.20 94.52V134.96M1166.87 96.06V136.50M1171.55 82.65V123.09M1176.22 67.70V108.15M1180.90 73.64V114.08M1185.58 81.55V121.99M1190.25 73.64V114.08M1194.93 128.81V169.25M1199.60 134.30V174.75M1204.28 121.56V162.00M1208.96 118.04V158.48M1213.63 131.89V172.33M1218.31 147.93V188.37M1222.98 139.36V179.80M1227.66 150.79V191.23M1232.34 123.53V163.98M1237.01 140.46V180.90M1241.69 145.29V185.74M1246.36 134.30V174.75M1251.04 113.42V153.87M1255.72 135.40V175.85M1260.39 99.58V140.02M1265.07 108.59V149.03M1269.74 88.15V128.59M1274.42 86.17V126.61M1279.10 142.44V182.88M1283.77 121.56V162.00M1288.45 122.43V162.88" stroke="#1f77b4" stroke-width="1.5" fill="none"/>
<g fill="#1f77b4"><circle cx="1059.32" cy="161.34" r="1.9"/><circle cx="1064.00" cy="147.49" r="1.9"/><circle cx="1068.68" cy="159.36" r="1.9"/><circle cx="1073.35" cy="119.36" r="1.9"/><circle cx="1078.03" cy="171.67" r="1.9"/><circle cx="1082.70" cy="132.98" r="1.9"/><circle cx="1087.38" cy="149.91" r="1.9"/><circle cx="1092.06" cy="157.38" r="1.9"/><circle cx="1096.73" cy="157.82" r="1.9"/><circle cx="1101.41" cy="124.41" r="1.9"/><circle cx="1106.08" cy="118.04" r="1.9"/><circle cx="1110.76" cy="162.88" r="1.9"/><circle cx="1115.44" cy="137.38" r="1.9"/><circle cx="1120.11" cy="141.78" r="1.9"/><circle cx="1124.79" cy="151.89" r="1.9"/><circle cx="1129.46" cy="110.35" r="1.9"/><circle cx="1134.14" cy="109.47" r="1.9"/><circle cx="1138.82" cy="153.21" r="1.9"/><circle cx="1143.49" cy="149.25" r="1.9"/><circle cx="1148.17" cy="123.09" r="1.9"/><circle cx="1152.84" cy="146.61" r="1.9"/><circle cx="1157.52" cy="147.05" r="1.9"/><circle cx="1162.20" cy="114.74" r="1.9"/><circle cx="1166.87" cy="116.28" r="1.9"/><circle cx="1171.55" cy="102.87" r="1.9"/><circle cx="1176.22" cy="87.93" r="1.9"/><circle cx="1180.90" cy="93.86" r="1.9"/><circle cx="1185.58" cy="101.77" r="1.9"/><circle cx="1190.25" cy="93.86" r="1.9"/><circle cx="1194.93" cy="149.03" r="1.9"/><circle cx="1199.60" cy="154.53" r="1.9"/><circle cx="1204.28" cy="141.78" r="1.9"/><circle cx="1208.96" cy="138.26" r="1.9"/><circle cx="1213.63" cy="152.11" r="1.9"/><circle cx="1218.31" cy="168.15" r="1.9"/><circle cx="1222.98" cy="159.58" r="1.9"/><circle cx="1227.66" cy="171.01" r="1.9"/><circle cx="1232.34" cy="143.75" r="1.9"/><circle cx="1237.01" cy="160.68" r="1.9"/><circle cx="1241.69" cy="165.52" r="1.9"/><circle cx="1246.36" cy="154.53" r="1.9"/><circle cx="1251.04" cy="133.64" r="1.9"/><circle cx="1255.72" cy="155.62" r="1.9"/><circle cx="1260.39" cy="119.80" r="1.9"/><circle cx="1265.07" cy="128.81" r="1.9"/><circle cx="1269.74" cy="108.37" r="1.9"/><circle cx="1274.42" cy="106.39" r="1.9"/><circle cx="1279.10" cy="162.66" r="1.9"/><circle cx="1283.77" cy="141.78" r="1.9"/><circle cx="1288.45" cy="142.66" r="1.9"/></g>
<polyline points="1071.01,147.05 1071.74,147.05 1072.46,147.05 1073.19,147.05 1073.91,147.05 1074.64,147.05 1075.36,147.05 1076.09,147.05 1076.81,147.05 1077.54,147.05 1078.26,147.05 1078.99,147.05 1079.71,147.05 1080.44,147.05 1081.16,147.05 1081.89,147.05 1082.61,147.05 1083.34,147.05 1084.06,147.05 1084.78,147.05 1085.51,147.05 1086.23,147.05 1086.96,147.05 1087.68,147.05 1088.41,147.05 1089.13,147.05 1089.86,147.05 1090.58,147.05 1091.31,147.05 1092.03,147.05 1092.76,147.05 1093.48,147.05 1094.21,147.05 1094.93,147.05 1095.66,147.05 1096.38,147.05 1097.11,147.05 1097.83,147.05 1098.56,147.05 1099.28,147.05 1100.01,147.05 1100.73,147.05 1101.45,147.05 1102.18,147.05 1102.90,147.05 1103.63,147.05 1104.35,147.05 1105.08,147.05 1105.80,147.05 1106.53,147.05 1107.25,147.05 1107.98,147.05 1108.70,147.05 1109.43,147.05 1110.15,147.05 1110.88,147.05 1111.60,147.05 1112.33,147.05 1113.05,147.05 1113.78,147.05 1114.50,147.05 1115.23,147.05 1115.95,147.05 1116.68,147.05 1117.40,147.05 1118.12,147.05 1118.85,147.05 1119.57,147.05 1120.30,147.05 1121.02,147.05 1121.75,147.05 1122.47,147.05 1123.20,147.05 1123.92,147.05 1124.65,147.05 1125.37,147.05 1126.10,147.05 1126.82,147.05 1127.55,147.05 1128.27,147.05 1129.00,147.05 1129.72,147.05 1130.45,147.05 1131.17,147.05 1131.90,147.05 1132.62,147.05 1133.35,147.05 1134.07,147.05 1134.79,147.05 1135.52,147.05 1136.24,147.05 1136.97,147.05 1137.69,147.05 1138.42,147.04 1139.14,147.04 1139.87,147.04 1140.59,147.03 1141.32,147.02 1142.04,147.01 1142.77,147.00 1143.49,146.98 1144.22,146.96 1144.94,146.94 1145.67,146.90 1146.39,146.86 1147.12,146.80 1147.84,146.74 1148.57,146.65 1149.29,146.55 1150.02,146.42 1150.74,146.27 1151.46,146.08 1152.19,145.86 1152.91,145.59 1153.64,145.28 1154.36,144.90 1155.09,144.46 1155.81,143.96 1156.54,143.37 1157.26,142.69 1157.99,141.91 1158.71,141.04 1159.44,140.05 1160.16,138.94 1160.89,137.71 1161.61,136.36 1162.34,134.87 1163.06,133.26 1163.79,131.51 1164.51,129.65 1165.24,127.66 1165.96,125.57 1166.68,123.39 1167.41,121.12 1168.13,118.80 1168.86,116.44 1169.58,114.06 1170.31,111.69 1171.03,109.37 1171.76,107.11 1172.48,104.95 1173.21,102.91 1173.93,101.04 1174.66,99.35 1175.38,97.87 1176.11,96.62 1176.83,95.62 1177.56,94.90 1178.28,94.46 1179.01,94.30 1179.73,94.44 1180.46,94.86 1181.18,95.57 1181.91,96.55 1182.63,97.78 1183.35,99.24 1184.08,100.92 1184.80,102.79 1185.53,104.81 1186.25,106.96 1186.98,109.22 1187.70,111.54 1188.43,113.91 1189.15,116.28 1189.88,118.65 1190.60,120.97 1191.33,123.24 1192.05,125.43 1192.78,127.53 1193.50,129.52 1194.23,131.40 1194.95,133.15 1195.68,134.77 1196.40,136.27 1197.13,137.63 1197.85,138.87 1198.58,139.98 1199.30,140.98 1200.02,141.86 1200.75,142.64 1201.47,143.32 1202.20,143.92 1202.92,144.43 1203.65,144.88 1204.37,145.25 1205.10,145.57 1205.82,145.84 1206.55,146.07 1207.27,146.26 1208.00,146.41 1208.72,146.54 1209.45,146.65 1210.17,146.73 1210.90,146.80 1211.62,146.85 1212.35,146.90 1213.07,146.93 1213.80,146.96 1214.52,146.98 1215.25,147.00 1215.97,147.01 1216.69,147.02 1217.42,147.03 1218.14,147.04 1218.87,147.04 1219.59,147.04 1220.32,147.05 1221.04,147.05 1221.77,147.05 1222.49,147.05 1223.22,147.05 1223.94,147.05 1224.67,147.05 1225.39,147.05 1226.12,147.05 1226.84,147.05 1227.57,147.05 1228.29,147.05 1229.02,147.05 1229.74,147.05 1230.47,147.05 1231.19,147.05 1231.92,147.05 1232.64,147.05 1233.36,147.05 1234.09,147.05 1234.81,147.05 1235.54,147.05 1236.26,147.05 1236.99,147.05 1237.71,147.05 1238.44,147.05 1239.16,147.05 1239.89,147.05 1240.61,147.05 1241.34,147.05 1242.06,147.05 1242.79,147.05 1243.51,147.05 1244.24,147.05 1244.96,147.05 1245.69,147.05 1246.41,147.05 1247.14,147.05 1247.86,147.05 1248.59,147.05 1249.31,147.05 1250.03,147.05 1250.76,147.05 1251.48,147.05 1252.21,147.05 1252.93,147.05 1253.66,147.05 1254.38,147.05 1255.11,147.05 1255.83,147.05 1256.56,147.05 1257.28,147.05 1258.01,147.05 1258.73,147.05 1259.46,147.05 1260.18,147.05 1260.91,147.05 1261.63,147.05 1262.36,147.05 1263.08,147.05 1263.81,147.05 1264.53,147.05 1265.26,147.05 1265.98,147.05 1266.70,147.05 1267.43,147.05 1268.15,147.05 1268.88,147.05 1269.60,147.05 1270.33,147.05 1271.05,147.05 1271.78,147.05 1272.50,147.05 1273.23,147.05 1273.95,147.05 1274.68,147.05 1275.40,147.05 1276.13,147.05 1276.85,147.05 1277.58,147.05 1278.30,147.05 1279.03,147.05 1279.75,147.05 1280.48,147.05 1281.20,147.05 1281.92,147.05 1282.65,147.05 1283.37,147.05 1284.10,147.05 1284.82,147.05 1285.55,147.05 1286.27,147.05 1287.00,147.05 1287.72,147.05 1288.45,147.05" fill="none" stroke="#333" stroke-width="1.6"/>
<rect x="1048.0" y="60.4" width="251.1" height="150.6" fill="none" stroke="#333" stroke-width="1"/>
<line x1="1044.5" y1="204.20" x2="1048.0" y2="204.20" stroke="#333" stroke-width="1"/>
<text x="1041.50" y="207.50" font-family='"Liberation Sans", sans-serif' font-size="9.2" fill="#000" text-anchor="end" textLength="5.80" lengthAdjust="spacingAndGlyphs" >0</text>
<line x1="1044.5" y1="182.22" x2="1048.0" y2="182.22" stroke="#333" stroke-width="1"/>
<text x="1041.50" y="185.52" font-family='"Liberation Sans", sans-serif' font-size="9.2" fill="#000" text-anchor="end" textLength="5.80" lengthAdjust="spacingAndGlyphs" >1</text>
<line x1="1044.5" y1="160.24" x2="1048.0" y2="160.24" stroke="#333" stroke-width="1"/>
<text x="1041.50" y="163.54" font-family='"Liberation Sans", sans-serif' font-size="9.2" fill="#000" text-anchor="end" textLength="5.80" lengthAdjust="spacingAndGlyphs" >2</text>
<line x1="1044.5" y1="138.26" x2="1048.0" y2="138.26" stroke="#333" stroke-width="1"/>
<text x="1041.50" y="141.56" font-family='"Liberation Sans", sans-serif' font-size="9.2" fill="#000" text-anchor="end" textLength="5.80" lengthAdjust="spacingAndGlyphs" >3</text>
<line x1="1044.5" y1="116.28" x2="1048.0" y2="116.28" stroke="#333" stroke-width="1"/>
<text x="1041.50" y="119.58" font-family='"Liberation Sans", sans-serif' font-size="9.2" fill="#000" text-anchor="end" textLength="5.80" lengthAdjust="spacingAndGlyphs" >4</text>
<line x1="1044.5" y1="94.30" x2="1048.0" y2="94.30" stroke="#333" stroke-width="1"/>
<text x="1041.50" y="97.60" font-family='"Liberation Sans", sans-serif' font-size="9.2" fill="#000" text-anchor="end" textLength="5.80" lengthAdjust="spacingAndGlyphs" >5</text>
<line x1="1044.5" y1="72.32" x2="1048.0" y2="72.32" stroke="#333" stroke-width="1"/>
<text x="1041.50" y="75.62" font-family='"Liberation Sans", sans-serif' font-size="9.2" fill="#000" text-anchor="end" textLength="5.80" lengthAdjust="spacingAndGlyphs" >6</text>
<line x1="1087.38" y1="211.0" x2="1087.38" y2="214.5" stroke="#333" stroke-width="1"/>
<text x="1087.38" y="224.00" font-family='"Liberation Sans", sans-serif' font-size="9.2" fill="#000" text-anchor="middle" textLength="23.50" lengthAdjust="spacingAndGlyphs" >4900</text>
<line x1="1134.14" y1="211.0" x2="1134.14" y2="214.5" stroke="#333" stroke-width="1"/>
<text x="1134.14" y="224.00" font-family='"Liberation Sans", sans-serif' font-size="9.2" fill="#000" text-anchor="middle" textLength="23.50" lengthAdjust="spacingAndGlyphs" >4920</text>
<line x1="1180.90" y1="211.0" x2="1180.90" y2="214.5" stroke="#333" stroke-width="1"/>
<text x="1180.90" y="224.00" font-family='"Liberation Sans", sans-serif' font-size="9.2" fill="#000" text-anchor="middle" textLength="23.50" lengthAdjust="spacingAndGlyphs" >4940</text>
<line x1="1227.66" y1="211.0" x2="1227.66" y2="214.5" stroke="#333" stroke-width="1"/>
<text x="1227.66" y="224.00" font-family='"Liberation Sans", sans-serif' font-size="9.2" fill="#000" text-anchor="middle" textLength="23.50" lengthAdjust="spacingAndGlyphs" >4960</text>
<line x1="1274.42" y1="211.0" x2="1274.42" y2="214.5" stroke="#333" stroke-width="1"/>
<text x="1274.42" y="224.00" font-family='"Liberation Sans", sans-serif' font-size="9.2" fill="#000" text-anchor="middle" textLength="23.50" lengthAdjust="spacingAndGlyphs" >4980</text>
<text x="1049.50" y="70.90" font-family='"Liberation Sans", sans-serif' font-size="9.2" fill="#000" text-anchor="start" >e</text>
<text x="1055.00" y="66.50" font-family='"Liberation Sans", sans-serif' font-size="6.4" fill="#000" text-anchor="start" textLength="9.00" lengthAdjust="spacingAndGlyphs" >−17</text>
<text x="1064.50" y="70.90" font-family='"Liberation Sans", sans-serif' font-size="9.2" fill="#000" text-anchor="start" textLength="10.50" lengthAdjust="spacingAndGlyphs" >x2</text>
<text x="1074.90" y="70.90" font-family='"Liberation Sans", sans-serif' font-size="9.2" fill="#000" text-anchor="start" textLength="9.00" lengthAdjust="spacingAndGlyphs" font-style="italic" >Å</text>
<defs><clipPath id="cspec"><rect x="101.8" y="348.4" width="1197.7" height="84.0"/></clipPath><pattern id="hatch" patternUnits="userSpaceOnUse" width="12" height="24" patternTransform="translate(0,0)"><path d="M-2 26 L14 -2" stroke="#222" stroke-width="0.9"/></pattern></defs>
<g clip-path="url(#cspec)">
<rect x="937.1" y="348.4" width="54.8" height="84" fill="#c0bf00"/>
<polygon points="101.5,437.1 102.7,428.4 103.9,420.6 105.1,414.0 106.3,405.8 107.4,403.8 108.6,402.2 109.8,400.5 111.0,399.4 112.2,398.3 113.4,397.6 114.6,398.5 115.7,397.6 116.9,397.6 118.1,397.0 119.3,397.2 120.5,398.9 121.7,397.9 122.9,396.7 124.1,398.0 125.2,398.0 126.4,397.4 127.6,395.8 128.8,398.3 130.0,398.0 131.2,397.6 132.4,397.5 133.5,397.3 134.7,397.6 135.9,396.8 137.1,398.0 138.3,398.1 139.5,399.0 140.7,398.7 141.8,398.1 143.0,397.2 144.2,398.3 145.4,397.5 146.6,398.2 147.8,397.3 149.0,398.9 150.2,397.6 151.3,398.4 152.5,398.1 153.7,398.3 154.9,397.3 156.1,397.2 157.3,397.9 158.5,397.3 159.6,396.7 160.8,397.4 162.0,397.3 163.2,397.4 164.4,396.8 165.6,396.6 166.8,397.9 167.9,398.3 169.1,397.4 170.3,396.9 171.5,397.8 172.7,396.9 173.9,397.5 175.1,397.5 176.3,397.1 177.4,397.1 178.6,398.2 179.8,397.6 181.0,399.0 182.2,398.1 183.4,398.4 184.6,398.5 185.7,397.2 186.9,397.4 188.1,397.5 189.3,397.3 190.5,398.2 191.7,398.3 192.9,398.5 194.0,398.5 195.2,397.9 196.4,398.1 197.6,398.8 198.8,397.7 200.0,397.9 201.2,397.6 202.4,397.2 203.5,398.9 204.7,397.8 205.9,398.4 207.1,397.9 208.3,398.3 209.5,397.2 210.7,398.6 211.8,397.4 213.0,398.5 214.2,398.1 215.4,398.6 216.6,399.1 217.8,398.4 219.0,398.6 220.1,399.7 221.3,399.1 222.5,398.9 223.7,399.4 224.9,399.2 226.1,399.0 227.3,398.3 228.5,398.4 229.6,399.4 230.8,398.1 232.0,399.4 233.2,398.9 234.4,398.6 235.6,400.1 236.8,399.8 237.9,399.5 239.1,399.2 240.3,399.4 241.5,399.0 242.7,400.4 243.9,400.7 245.1,400.1 246.2,399.3 247.4,399.1 248.6,399.7 249.8,399.7 251.0,399.6 252.2,400.0 253.4,399.9 254.6,399.7 255.7,400.5 256.9,400.9 258.1,398.9 259.3,399.3 260.5,399.6 261.7,399.6 262.9,399.2 264.0,400.3 265.2,400.2 266.4,399.8 267.6,400.6 268.8,399.4 270.0,399.9 271.2,400.6 272.4,400.1 273.5,400.5 274.7,400.5 275.9,400.3 277.1,400.0 278.3,400.0 279.5,400.9 280.7,400.0 281.8,400.7 283.0,401.5 284.2,400.3 285.4,401.5 286.6,400.8 287.8,400.1 289.0,400.0 290.1,400.9 291.3,401.0 292.5,400.8 293.7,401.9 294.9,399.6 296.1,401.3 297.3,400.0 298.5,401.0 299.6,400.2 300.8,399.8 302.0,400.5 303.2,399.7 304.4,401.4 305.6,400.6 306.8,401.6 307.9,401.8 309.1,401.4 310.3,401.7 311.5,401.7 312.7,400.9 313.9,401.6 315.1,401.6 316.2,401.5 317.4,401.8 318.6,400.3 319.8,400.6 321.0,400.6 322.2,402.0 323.4,401.8 324.6,401.7 325.7,401.6 326.9,401.9 328.1,402.0 329.3,401.1 330.5,401.4 331.7,401.2 332.9,401.1 334.0,402.2 335.2,402.5 336.4,400.9 337.6,401.6 338.8,401.1 340.0,402.1 341.2,401.6 342.3,402.2 343.5,402.5 344.7,402.4 345.9,403.4 347.1,402.0 348.3,402.4 349.5,402.1 350.7,401.2 351.8,401.7 353.0,402.4 354.2,401.4 355.4,402.2 356.6,401.4 357.8,402.7 359.0,401.9 360.1,401.5 361.3,402.5 362.5,402.6 363.7,402.1 364.9,403.0 366.1,403.5 367.3,402.1 368.4,401.9 369.6,401.9 370.8,402.5 372.0,402.8 373.2,402.5 374.4,403.2 375.6,403.7 376.8,403.4 377.9,401.9 379.1,403.2 380.3,404.3 381.5,403.5 382.7,402.8 383.9,403.0 385.1,402.9 386.2,403.8 387.4,403.1 388.6,402.5 389.8,403.5 391.0,402.5 392.2,403.8 393.4,403.0 394.5,403.4 395.7,402.9 396.9,403.5 398.1,402.5 399.3,404.0 400.5,403.5 401.7,404.0 402.9,403.2 404.0,404.2 405.2,403.7 406.4,403.9 407.6,404.4 408.8,403.4 410.0,404.3 411.2,403.2 412.3,403.8 413.5,402.5 414.7,404.2 415.9,404.3 417.1,403.9 418.3,403.5 419.5,404.0 420.7,403.5 421.8,403.6 423.0,403.9 424.2,405.3 425.4,403.8 426.6,403.8 427.8,404.1 429.0,404.7 430.1,404.5 431.3,404.1 432.5,404.3 433.7,404.1 434.9,404.2 436.1,404.0 437.3,404.6 438.4,403.5 439.6,404.7 440.8,405.6 442.0,403.4 443.2,404.6 444.4,403.9 445.6,404.4 446.8,404.0 447.9,404.9 449.1,403.9 450.3,404.2 451.5,404.4 452.7,403.5 453.9,403.5 455.1,404.5 456.2,403.8 457.4,403.3 458.6,405.2 459.8,404.6 461.0,404.6 462.2,404.2 463.4,404.3 464.5,403.6 465.7,405.8 466.9,405.0 468.1,404.8 469.3,403.9 470.5,404.0 471.7,404.6 472.9,404.3 474.0,404.4 475.2,404.8 476.4,404.4 477.6,404.8 478.8,403.4 480.0,403.8 481.2,404.7 482.3,404.3 483.5,403.5 484.7,404.8 485.9,405.3 487.1,404.5 488.3,404.0 489.5,405.6 490.6,404.9 491.8,405.2 493.0,404.8 494.2,405.7 495.4,405.5 496.6,403.3 497.8,405.3 499.0,405.3 500.1,404.5 501.3,405.6 502.5,404.6 503.7,404.4 504.9,404.6 506.1,405.5 507.3,405.6 508.4,404.2 509.6,405.0 510.8,404.4 512.0,404.7 513.2,405.4 514.4,405.2 515.6,405.8 516.7,405.3 517.9,405.8 519.1,404.5 520.3,404.8 521.5,404.5 522.7,404.7 523.9,405.5 525.1,405.8 526.2,405.7 527.4,404.6 528.6,405.1 529.8,405.3 531.0,404.8 532.2,406.1 533.4,405.6 534.5,404.8 535.7,406.5 536.9,406.2 538.1,404.9 539.3,405.7 540.5,407.1 541.7,406.3 542.8,404.8 544.0,405.5 545.2,405.7 546.4,406.2 547.6,406.2 548.8,405.9 550.0,406.7 551.2,404.7 552.3,405.7 553.5,406.2 554.7,406.6 555.9,406.7 557.1,404.9 558.3,406.1 559.5,405.2 560.6,407.2 561.8,406.7 563.0,406.0 564.2,406.3 565.4,404.1 566.6,406.6 567.8,406.0 569.0,406.7 570.1,406.4 571.3,407.0 572.5,405.8 573.7,406.7 574.9,406.4 576.1,406.1 577.3,406.4 578.4,406.5 579.6,406.8 580.8,406.0 582.0,406.5 583.2,406.6 584.4,406.8 585.6,407.3 586.7,407.3 587.9,405.2 589.1,406.5 590.3,407.7 591.5,407.8 592.7,407.9 593.9,407.8 595.1,408.1 596.2,407.1 597.4,408.3 598.6,407.8 599.8,407.8 601.0,407.9 602.2,407.6 603.4,407.4 604.5,407.5 605.7,406.9 606.9,407.0 608.1,407.3 609.3,408.7 610.5,408.7 611.7,407.7 612.8,407.7 614.0,408.2 615.2,407.7 616.4,408.2 617.6,409.4 618.8,408.1 620.0,407.9 621.2,407.1 622.3,407.0 623.5,408.4 624.7,407.9 625.9,408.3 627.1,408.0 628.3,409.1 629.5,409.4 630.6,408.2 631.8,408.3 633.0,409.8 634.2,408.4 635.4,409.2 636.6,408.9 637.8,408.6 638.9,409.2 640.1,409.1 641.3,408.6 642.5,409.6 643.7,408.2 644.9,410.1 646.1,409.6 647.3,408.7 648.4,410.0 649.6,408.8 650.8,409.2 652.0,409.5 653.2,409.1 654.4,409.4 655.6,408.9 656.7,408.9 657.9,408.9 659.1,409.2 660.3,409.4 661.5,409.7 662.7,409.2 663.9,409.6 665.0,409.1 666.2,409.9 667.4,409.4 668.6,410.5 669.8,408.6 671.0,408.5 672.2,409.1 673.4,409.6 674.5,409.0 675.7,409.4 676.9,410.6 678.1,410.1 679.3,409.5 680.5,409.5 681.7,409.8 682.8,409.9 684.0,409.2 685.2,410.0 686.4,409.1 687.6,409.2 688.8,409.7 690.0,408.3 691.1,409.4 692.3,408.8 693.5,409.0 694.7,410.2 695.9,410.0 697.1,410.8 698.3,409.4 699.5,409.6 700.6,410.6 701.8,410.1 703.0,409.8 704.2,408.9 705.4,410.5 706.6,410.3 707.8,410.3 708.9,409.2 710.1,409.7 711.3,410.8 712.5,409.9 713.7,409.7 714.9,409.7 716.1,409.9 717.3,410.0 718.4,410.8 719.6,411.8 720.8,409.7 722.0,410.1 723.2,409.4 724.4,411.1 725.6,409.5 726.7,409.0 727.9,410.3 729.1,410.8 730.3,409.8 731.5,410.6 732.7,410.7 733.9,410.0 735.0,410.1 736.2,410.2 737.4,409.8 738.6,410.4 739.8,410.8 741.0,410.5 742.2,411.1 743.4,410.7 744.5,410.7 745.7,410.7 746.9,410.4 748.1,410.4 749.3,410.2 750.5,410.5 751.7,410.4 752.8,411.1 754.0,410.0 755.2,410.9 756.4,411.1 757.6,409.6 758.8,411.2 760.0,410.2 761.1,411.2 762.3,409.3 763.5,411.2 764.7,410.4 765.9,410.4 767.1,409.9 768.3,409.6 769.5,410.4 770.6,410.4 771.8,409.8 773.0,411.4 774.2,410.7 775.4,411.1 776.6,411.6 777.8,410.6 778.9,411.0 780.1,411.1 781.3,410.8 782.5,410.6 783.7,410.4 784.9,411.7 786.1,410.9 787.2,410.7 788.4,411.1 789.6,410.9 790.8,410.7 792.0,410.7 793.2,410.2 794.4,411.0 795.6,411.1 796.7,411.0 797.9,410.9 799.1,411.5 800.3,410.4 801.5,410.0 802.7,410.7 803.9,411.2 805.0,411.4 806.2,410.6 807.4,410.9 808.6,410.6 809.8,410.8 811.0,411.0 812.2,411.1 813.3,410.4 814.5,411.2 815.7,411.2 816.9,410.4 818.1,411.5 819.3,409.8 820.5,410.8 821.7,411.1 822.8,412.0 824.0,410.3 825.2,411.4 826.4,411.5 827.6,411.2 828.8,410.1 830.0,411.5 831.1,411.5 832.3,410.5 833.5,411.2 834.7,411.3 835.9,411.4 837.1,410.8 838.3,410.9 839.4,411.5 840.6,410.5 841.8,411.0 843.0,410.5 844.2,409.9 845.4,411.0 846.6,411.8 847.8,410.5 848.9,411.0 850.1,411.1 851.3,411.0 852.5,410.3 853.7,411.3 854.9,410.2 856.1,410.6 857.2,411.2 858.4,410.9 859.6,410.7 860.8,411.6 862.0,411.8 863.2,410.5 864.4,411.5 865.6,412.0 866.7,411.3 867.9,411.6 869.1,410.6 870.3,412.0 871.5,410.8 872.7,410.6 873.9,412.0 875.0,411.3 876.2,410.3 877.4,411.6 878.6,410.0 879.8,410.4 881.0,412.0 882.2,411.1 883.3,410.3 884.5,411.1 885.7,411.5 886.9,412.8 888.1,411.0 889.3,410.4 890.5,411.5 891.7,410.8 892.8,410.9 894.0,410.8 895.2,411.9 896.4,409.9 897.6,411.4 898.8,411.2 900.0,412.0 901.1,411.1 902.3,410.9 903.5,409.9 904.7,411.3 905.9,412.1 907.1,411.0 908.3,411.2 909.4,411.0 910.6,411.4 911.8,411.4 913.0,411.6 914.2,411.3 915.4,410.4 916.6,411.4 917.8,410.6 918.9,411.3 920.1,411.0 921.3,411.7 922.5,410.7 923.7,411.3 924.9,410.9 926.1,411.6 927.2,411.9 928.4,411.0 929.6,410.6 930.8,411.6 932.0,411.1 933.2,410.5 934.4,411.5 935.5,411.1 936.7,410.7 937.9,410.8 939.1,411.0 940.3,411.0 941.5,411.3 942.7,411.1 943.9,410.4 945.0,411.6 946.2,411.3 947.4,410.8 948.6,411.0 949.8,411.2 951.0,410.3 952.2,412.0 953.3,412.1 954.5,410.6 955.7,411.6 956.9,409.9 958.1,411.6 959.3,410.8 960.5,411.2 961.6,411.9 962.8,410.2 964.0,411.1 965.2,410.6 966.4,411.4 967.6,411.6 968.8,410.5 970.0,411.1 971.1,411.4 972.3,411.1 973.5,411.9 974.7,410.3 975.9,411.2 977.1,411.3 978.3,411.9 979.4,410.9 980.6,411.6 981.8,411.4 983.0,410.8 984.2,410.2 985.4,410.8 986.6,412.1 987.7,411.2 988.9,411.6 990.1,410.4 991.3,411.4 992.5,411.0 993.7,411.1 994.9,410.6 996.1,410.7 997.2,411.4 998.4,410.0 999.6,411.5 1000.8,411.2 1002.0,411.3 1003.2,411.4 1004.4,411.9 1005.5,410.8 1006.7,411.2 1007.9,410.9 1009.1,411.2 1010.3,411.1 1011.5,409.6 1012.7,411.6 1013.9,411.4 1015.0,412.3 1016.2,411.5 1017.4,409.6 1018.6,410.3 1019.8,410.8 1021.0,411.4 1022.2,410.9 1023.3,410.1 1024.5,411.7 1025.7,410.8 1026.9,410.6 1028.1,410.3 1029.3,411.6 1030.5,410.9 1031.6,410.2 1032.8,411.8 1034.0,411.2 1035.2,411.8 1036.4,411.3 1037.6,410.9 1038.8,411.2 1040.0,411.6 1041.1,411.0 1042.3,410.3 1043.5,411.4 1044.7,411.8 1045.9,411.1 1047.1,412.2 1048.3,411.5 1049.4,410.9 1050.6,411.9 1051.8,411.4 1053.0,410.5 1054.2,411.4 1055.4,410.3 1056.6,411.0 1057.7,412.1 1058.9,411.7 1060.1,410.8 1061.3,410.7 1062.5,411.1 1063.7,410.7 1064.9,411.1 1066.1,412.3 1067.2,410.9 1068.4,411.2 1069.6,410.8 1070.8,411.3 1072.0,410.8 1073.2,411.1 1074.4,411.5 1075.5,411.3 1076.7,411.0 1077.9,410.9 1079.1,410.0 1080.3,410.7 1081.5,411.8 1082.7,411.3 1083.8,411.1 1085.0,411.1 1086.2,411.4 1087.4,412.2 1088.6,412.0 1089.8,410.4 1091.0,410.9 1092.2,411.4 1093.3,410.7 1094.5,411.1 1095.7,411.2 1096.9,411.6 1098.1,411.1 1099.3,410.6 1100.5,410.6 1101.6,410.6 1102.8,411.0 1104.0,411.8 1105.2,411.6 1106.4,410.9 1107.6,410.4 1108.8,411.2 1109.9,411.1 1111.1,411.3 1112.3,412.8 1113.5,412.2 1114.7,410.6 1115.9,411.0 1117.1,412.0 1118.3,411.1 1119.4,412.3 1120.6,411.9 1121.8,411.3 1123.0,411.0 1124.2,411.6 1125.4,411.6 1126.6,410.9 1127.7,411.1 1128.9,412.0 1130.1,410.5 1131.3,411.2 1132.5,411.8 1133.7,411.6 1134.9,411.7 1136.0,410.7 1137.2,411.8 1138.4,411.0 1139.6,411.3 1140.8,412.0 1142.0,411.0 1143.2,411.8 1144.4,412.1 1145.5,411.4 1146.7,411.4 1147.9,410.4 1149.1,412.1 1150.3,411.7 1151.5,410.8 1152.7,410.1 1153.8,411.1 1155.0,411.2 1156.2,411.0 1157.4,411.6 1158.6,411.8 1159.8,410.4 1161.0,411.5 1162.2,410.4 1163.3,411.1 1164.5,411.7 1165.7,412.0 1166.9,412.1 1168.1,412.0 1169.3,411.6 1170.5,410.7 1171.6,411.9 1172.8,411.6 1174.0,411.7 1175.2,410.4 1176.4,411.8 1177.6,411.2 1178.8,412.1 1179.9,411.2 1181.1,410.4 1182.3,410.9 1183.5,411.2 1184.7,411.0 1185.9,411.5 1187.1,411.1 1188.3,410.6 1189.4,410.9 1190.6,411.0 1191.8,411.7 1193.0,411.7 1194.2,411.8 1195.4,410.8 1196.6,411.8 1197.7,410.3 1198.9,410.7 1200.1,411.2 1201.3,411.3 1202.5,411.3 1203.7,412.2 1204.9,411.8 1206.0,411.7 1207.2,411.6 1208.4,412.0 1209.6,412.0 1210.8,412.2 1212.0,412.0 1213.2,411.6 1214.4,411.0 1215.5,411.4 1216.7,411.1 1217.9,411.7 1219.1,411.6 1220.3,411.2 1221.5,410.8 1222.7,411.3 1223.8,411.4 1225.0,411.4 1226.2,411.8 1227.4,410.7 1228.6,412.0 1229.8,410.6 1231.0,411.0 1232.1,410.9 1233.3,411.5 1234.5,411.1 1235.7,412.4 1236.9,412.2 1238.1,411.8 1239.3,412.1 1240.5,411.8 1241.6,411.9 1242.8,411.8 1244.0,411.3 1245.2,412.0 1246.4,411.8 1247.6,411.8 1248.8,410.9 1249.9,411.5 1251.1,411.6 1252.3,411.6 1253.5,412.3 1254.7,411.6 1255.9,411.0 1257.1,411.3 1258.2,412.0 1259.4,412.8 1260.6,411.9 1261.8,411.7 1263.0,411.2 1264.2,411.3 1265.4,412.1 1266.6,411.4 1267.7,410.3 1268.9,411.9 1270.1,410.7 1271.3,412.1 1272.5,411.1 1273.7,412.2 1274.9,411.5 1276.0,411.9 1277.2,410.6 1278.4,412.0 1279.6,410.1 1280.8,411.9 1282.0,411.5 1283.2,411.6 1284.3,412.2 1285.5,411.2 1286.7,410.7 1287.9,412.1 1289.1,411.0 1290.3,412.0 1291.5,412.6 1292.7,411.6 1293.8,411.3 1295.0,411.3 1296.2,411.6 1297.4,410.3 1298.6,411.5 1299.8,411.0 1299.8,429.1 1298.6,428.7 1297.4,429.6 1296.2,431.1 1295.0,430.0 1293.8,430.3 1292.7,431.0 1291.5,430.0 1290.3,430.3 1289.1,428.9 1287.9,429.7 1286.7,430.5 1285.5,429.2 1284.3,429.7 1283.2,430.2 1282.0,430.9 1280.8,429.2 1279.6,429.1 1278.4,430.1 1277.2,429.7 1276.0,428.8 1274.9,430.3 1273.7,428.8 1272.5,431.7 1271.3,430.1 1270.1,430.1 1268.9,430.7 1267.7,429.2 1266.6,429.6 1265.4,430.0 1264.2,430.0 1263.0,431.0 1261.8,429.0 1260.6,430.5 1259.4,429.4 1258.2,430.4 1257.1,428.7 1255.9,429.8 1254.7,428.9 1253.5,430.8 1252.3,429.6 1251.1,431.0 1249.9,431.1 1248.8,430.1 1247.6,430.0 1246.4,429.2 1245.2,430.0 1244.0,431.1 1242.8,429.7 1241.6,430.3 1240.5,429.4 1239.3,429.1 1238.1,430.0 1236.9,429.6 1235.7,431.0 1234.5,430.2 1233.3,429.7 1232.1,430.9 1231.0,429.4 1229.8,430.0 1228.6,429.3 1227.4,429.8 1226.2,429.4 1225.0,430.8 1223.8,429.6 1222.7,430.6 1221.5,428.7 1220.3,429.1 1219.1,430.7 1217.9,429.6 1216.7,429.8 1215.5,429.6 1214.4,429.5 1213.2,430.0 1212.0,430.4 1210.8,430.4 1209.6,430.7 1208.4,430.2 1207.2,430.2 1206.0,429.7 1204.9,430.3 1203.7,430.3 1202.5,429.4 1201.3,429.8 1200.1,430.1 1198.9,429.9 1197.7,429.8 1196.6,430.9 1195.4,430.1 1194.2,429.8 1193.0,429.7 1191.8,429.7 1190.6,429.6 1189.4,429.8 1188.3,430.6 1187.1,429.9 1185.9,430.6 1184.7,429.7 1183.5,430.2 1182.3,429.7 1181.1,430.2 1179.9,430.1 1178.8,429.9 1177.6,429.2 1176.4,430.0 1175.2,430.1 1174.0,430.5 1172.8,430.5 1171.6,429.8 1170.5,429.5 1169.3,429.9 1168.1,430.2 1166.9,429.7 1165.7,430.8 1164.5,429.8 1163.3,430.5 1162.2,429.7 1161.0,429.4 1159.8,430.8 1158.6,429.6 1157.4,430.2 1156.2,430.7 1155.0,429.6 1153.8,430.2 1152.7,429.2 1151.5,430.5 1150.3,430.2 1149.1,429.9 1147.9,429.8 1146.7,430.3 1145.5,429.3 1144.4,429.4 1143.2,430.2 1142.0,430.8 1140.8,429.9 1139.6,431.3 1138.4,429.2 1137.2,430.9 1136.0,429.3 1134.9,429.5 1133.7,428.9 1132.5,429.9 1131.3,431.0 1130.1,430.6 1128.9,429.0 1127.7,429.9 1126.6,430.4 1125.4,430.2 1124.2,430.0 1123.0,430.2 1121.8,429.9 1120.6,429.7 1119.4,430.3 1118.3,430.1 1117.1,428.9 1115.9,429.9 1114.7,430.9 1113.5,430.3 1112.3,429.2 1111.1,430.0 1109.9,430.3 1108.8,431.0 1107.6,430.4 1106.4,430.3 1105.2,430.2 1104.0,430.6 1102.8,430.4 1101.6,430.2 1100.5,430.4 1099.3,429.4 1098.1,430.3 1096.9,429.5 1095.7,429.9 1094.5,429.8 1093.3,430.3 1092.2,430.4 1091.0,429.7 1089.8,430.4 1088.6,430.1 1087.4,429.6 1086.2,430.3 1085.0,429.8 1083.8,431.0 1082.7,430.3 1081.5,430.1 1080.3,430.0 1079.1,429.7 1077.9,430.7 1076.7,430.1 1075.5,431.3 1074.4,429.2 1073.2,431.3 1072.0,430.5 1070.8,430.5 1069.6,430.2 1068.4,431.0 1067.2,430.3 1066.1,429.6 1064.9,430.4 1063.7,429.5 1062.5,430.5 1061.3,430.1 1060.1,429.5 1058.9,429.6 1057.7,430.6 1056.6,429.0 1055.4,431.2 1054.2,429.9 1053.0,429.8 1051.8,430.2 1050.6,430.1 1049.4,431.5 1048.3,430.2 1047.1,429.5 1045.9,430.6 1044.7,429.7 1043.5,429.6 1042.3,430.0 1041.1,430.6 1040.0,430.7 1038.8,429.2 1037.6,429.3 1036.4,430.6 1035.2,429.9 1034.0,430.3 1032.8,429.4 1031.6,429.6 1030.5,430.8 1029.3,430.2 1028.1,430.7 1026.9,430.4 1025.7,430.7 1024.5,430.6 1023.3,431.4 1022.2,429.0 1021.0,430.5 1019.8,430.0 1018.6,429.6 1017.4,429.9 1016.2,432.0 1015.0,431.0 1013.9,429.7 1012.7,431.1 1011.5,430.2 1010.3,430.1 1009.1,430.9 1007.9,430.2 1006.7,430.2 1005.5,430.6 1004.4,430.5 1003.2,429.8 1002.0,430.1 1000.8,430.5 999.6,430.4 998.4,429.3 997.2,430.5 996.1,431.4 994.9,429.2 993.7,430.2 992.5,430.3 991.3,430.8 990.1,429.7 988.9,430.6 987.7,431.0 986.6,430.2 985.4,429.7 984.2,431.0 983.0,431.6 981.8,430.0 980.6,429.6 979.4,430.1 978.3,429.0 977.1,430.9 975.9,430.0 974.7,429.7 973.5,429.7 972.3,430.8 971.1,431.4 970.0,428.9 968.8,431.1 967.6,430.4 966.4,431.0 965.2,430.5 964.0,430.8 962.8,430.6 961.6,429.9 960.5,430.1 959.3,430.4 958.1,430.2 956.9,430.8 955.7,429.3 954.5,429.8 953.3,430.7 952.2,429.7 951.0,431.2 949.8,429.9 948.6,430.7 947.4,430.4 946.2,429.6 945.0,431.1 943.9,429.9 942.7,429.8 941.5,430.2 940.3,430.7 939.1,430.9 937.9,430.5 936.7,430.9 935.5,430.6 934.4,429.8 933.2,430.9 932.0,431.3 930.8,429.7 929.6,429.2 928.4,431.1 927.2,431.0 926.1,430.6 924.9,430.4 923.7,431.0 922.5,429.8 921.3,429.3 920.1,430.1 918.9,430.7 917.8,430.1 916.6,430.4 915.4,429.6 914.2,430.5 913.0,429.3 911.8,429.2 910.6,429.4 909.4,430.1 908.3,431.1 907.1,430.3 905.9,431.4 904.7,431.0 903.5,430.5 902.3,430.2 901.1,431.3 900.0,430.9 898.8,430.4 897.6,429.9 896.4,430.5 895.2,429.3 894.0,430.6 892.8,430.4 891.7,430.0 890.5,429.0 889.3,430.9 888.1,429.0 886.9,430.6 885.7,430.8 884.5,431.5 883.3,429.8 882.2,429.4 881.0,430.0 879.8,430.3 878.6,431.0 877.4,430.0 876.2,430.0 875.0,430.8 873.9,429.4 872.7,431.7 871.5,430.7 870.3,430.7 869.1,430.2 867.9,430.5 866.7,430.5 865.6,430.8 864.4,430.4 863.2,429.5 862.0,430.2 860.8,430.4 859.6,430.6 858.4,430.4 857.2,430.1 856.1,429.8 854.9,430.3 853.7,430.5 852.5,430.5 851.3,429.8 850.1,430.6 848.9,429.9 847.8,430.3 846.6,430.6 845.4,430.8 844.2,430.6 843.0,431.0 841.8,429.1 840.6,429.6 839.4,430.9 838.3,429.8 837.1,430.6 835.9,430.8 834.7,430.0 833.5,431.5 832.3,430.1 831.1,430.2 830.0,430.2 828.8,431.3 827.6,430.3 826.4,430.0 825.2,430.7 824.0,430.0 822.8,431.4 821.7,430.0 820.5,429.7 819.3,431.4 818.1,430.7 816.9,430.1 815.7,429.8 814.5,429.5 813.3,429.9 812.2,430.8 811.0,429.9 809.8,431.0 808.6,429.8 807.4,431.0 806.2,430.8 805.0,431.5 803.9,432.8 802.7,430.7 801.5,430.3 800.3,430.5 799.1,429.3 797.9,430.0 796.7,430.0 795.6,430.6 794.4,431.6 793.2,431.7 792.0,429.9 790.8,431.3 789.6,430.5 788.4,430.4 787.2,431.2 786.1,430.9 784.9,430.7 783.7,430.8 782.5,429.9 781.3,429.9 780.1,430.2 778.9,430.5 777.8,430.2 776.6,431.0 775.4,429.9 774.2,430.4 773.0,431.4 771.8,429.8 770.6,429.9 769.5,430.8 768.3,430.4 767.1,431.2 765.9,430.4 764.7,430.2 763.5,430.8 762.3,430.7 761.1,430.7 760.0,430.4 758.8,431.3 757.6,431.8 756.4,432.1 755.2,430.3 754.0,430.4 752.8,431.1 751.7,430.5 750.5,429.9 749.3,430.1 748.1,431.9 746.9,431.0 745.7,430.7 744.5,431.5 743.4,430.8 742.2,430.3 741.0,430.1 739.8,430.5 738.6,431.3 737.4,430.6 736.2,431.2 735.0,430.9 733.9,431.1 732.7,431.3 731.5,431.2 730.3,431.3 729.1,430.9 727.9,430.7 726.7,431.0 725.6,431.6 724.4,430.8 723.2,430.3 722.0,431.2 720.8,431.6 719.6,431.5 718.4,432.9 717.3,429.7 716.1,431.7 714.9,431.3 713.7,431.5 712.5,431.1 711.3,431.8 710.1,431.3 708.9,431.5 707.8,431.7 706.6,430.9 705.4,431.5 704.2,431.7 703.0,432.4 701.8,432.0 700.6,431.1 699.5,432.0 698.3,431.5 697.1,431.7 695.9,432.4 694.7,431.8 693.5,431.9 692.3,432.7 691.1,430.5 690.0,430.9 688.8,432.0 687.6,431.1 686.4,431.6 685.2,431.6 684.0,432.2 682.8,431.8 681.7,432.0 680.5,430.9 679.3,431.8 678.1,431.0 676.9,432.6 675.7,431.7 674.5,433.5 673.4,431.4 672.2,431.3 671.0,432.9 669.8,432.6 668.6,432.2 667.4,433.0 666.2,431.5 665.0,432.6 663.9,432.3 662.7,432.4 661.5,433.1 660.3,431.2 659.1,431.1 657.9,432.0 656.7,431.9 655.6,431.7 654.4,433.0 653.2,431.8 652.0,432.5 650.8,431.5 649.6,433.3 648.4,432.5 647.3,433.6 646.1,432.4 644.9,431.7 643.7,431.8 642.5,433.4 641.3,433.4 640.1,432.2 638.9,432.7 637.8,432.7 636.6,431.5 635.4,433.1 634.2,432.5 633.0,432.7 631.8,432.0 630.6,433.5 629.5,432.0 628.3,433.2 627.1,433.5 625.9,432.9 624.7,432.2 623.5,432.7 622.3,433.3 621.2,434.3 620.0,433.7 618.8,433.6 617.6,433.7 616.4,433.6 615.2,434.1 614.0,433.3 612.8,434.1 611.7,433.3 610.5,433.6 609.3,432.9 608.1,434.1 606.9,434.0 605.7,433.5 604.5,433.5 603.4,434.3 602.2,433.5 601.0,433.6 599.8,433.9 598.6,434.1 597.4,433.3 596.2,434.0 595.1,434.7 593.9,433.7 592.7,433.6 591.5,435.0 590.3,434.2 589.1,434.3 587.9,434.2 586.7,434.4 585.6,434.4 584.4,434.3 583.2,434.8 582.0,435.1 580.8,434.4 579.6,435.3 578.4,434.8 577.3,435.3 576.1,433.3 574.9,434.8 573.7,435.1 572.5,434.9 571.3,434.4 570.1,435.0 569.0,434.6 567.8,434.6 566.6,435.0 565.4,435.2 564.2,434.8 563.0,433.9 561.8,434.8 560.6,436.1 559.5,436.0 558.3,434.8 557.1,434.6 555.9,435.3 554.7,435.1 553.5,436.5 552.3,436.0 551.2,435.0 550.0,435.5 548.8,436.4 547.6,435.9 546.4,435.6 545.2,434.6 544.0,435.4 542.8,436.1 541.7,436.7 540.5,436.1 539.3,435.6 538.1,436.3 536.9,435.9 535.7,434.9 534.5,436.8 533.4,436.6 532.2,435.7 531.0,436.2 529.8,435.6 528.6,435.9 527.4,435.2 526.2,436.8 525.1,435.7 523.9,437.0 522.7,436.5 521.5,435.7 520.3,435.6 519.1,436.8 517.9,436.6 516.7,436.4 515.6,436.3 514.4,436.2 513.2,436.6 512.0,436.0 510.8,436.6 509.6,435.8 508.4,436.5 507.3,435.9 506.1,437.2 504.9,436.2 503.7,436.1 502.5,437.3 501.3,437.2 500.1,437.2 499.0,435.7 497.8,436.1 496.6,435.7 495.4,436.3 494.2,437.2 493.0,436.8 491.8,437.7 490.6,436.9 489.5,436.4 488.3,437.7 487.1,436.3 485.9,436.3 484.7,435.3 483.5,437.9 482.3,436.3 481.2,437.1 480.0,437.5 478.8,436.5 477.6,437.1 476.4,436.3 475.2,436.0 474.0,436.9 472.9,436.6 471.7,437.5 470.5,436.7 469.3,437.1 468.1,438.2 466.9,437.2 465.7,437.1 464.5,437.2 463.4,437.6 462.2,436.1 461.0,437.5 459.8,436.5 458.6,437.4 457.4,437.1 456.2,437.9 455.1,437.4 453.9,435.6 452.7,438.2 451.5,438.0 450.3,439.0 449.1,437.7 447.9,436.8 446.8,435.9 445.6,438.4 444.4,436.6 443.2,436.8 442.0,435.4 440.8,436.2 439.6,437.3 438.4,437.9 437.3,436.4 436.1,438.0 434.9,437.0 433.7,436.7 432.5,437.1 431.3,436.6 430.1,437.0 429.0,435.9 427.8,437.9 426.6,438.0 425.4,437.7 424.2,437.3 423.0,437.6 421.8,437.6 420.7,437.5 419.5,436.2 418.3,438.1 417.1,437.8 415.9,437.6 414.7,437.7 413.5,437.9 412.3,436.6 411.2,437.8 410.0,438.4 408.8,437.2 407.6,437.7 406.4,437.9 405.2,438.4 404.0,436.8 402.9,438.3 401.7,438.7 400.5,438.5 399.3,437.8 398.1,437.7 396.9,437.4 395.7,437.9 394.5,438.1 393.4,437.9 392.2,438.0 391.0,437.5 389.8,438.6 388.6,437.9 387.4,438.5 386.2,438.2 385.1,438.1 383.9,438.2 382.7,437.6 381.5,438.8 380.3,438.0 379.1,438.1 377.9,438.6 376.8,439.4 375.6,438.3 374.4,438.8 373.2,439.3 372.0,438.6 370.8,439.2 369.6,439.0 368.4,438.7 367.3,439.0 366.1,439.0 364.9,439.2 363.7,439.4 362.5,438.4 361.3,439.4 360.1,439.2 359.0,439.8 357.8,439.2 356.6,439.6 355.4,439.7 354.2,439.9 353.0,441.3 351.8,439.4 350.7,439.1 349.5,440.8 348.3,438.9 347.1,439.3 345.9,439.1 344.7,439.3 343.5,439.7 342.3,439.0 341.2,440.0 340.0,439.4 338.8,440.2 337.6,440.5 336.4,439.8 335.2,439.7 334.0,440.2 332.9,440.0 331.7,439.9 330.5,440.3 329.3,440.2 328.1,440.0 326.9,439.7 325.7,439.8 324.6,439.8 323.4,439.7 322.2,439.4 321.0,439.3 319.8,440.4 318.6,441.4 317.4,439.4 316.2,440.4 315.1,440.3 313.9,440.9 312.7,440.1 311.5,441.1 310.3,440.0 309.1,441.3 307.9,440.2 306.8,441.6 305.6,439.8 304.4,439.7 303.2,440.5 302.0,440.7 300.8,440.9 299.6,440.8 298.5,439.4 297.3,440.9 296.1,440.6 294.9,441.6 293.7,441.1 292.5,440.9 291.3,441.0 290.1,440.4 289.0,442.2 287.8,441.0 286.6,441.0 285.4,441.0 284.2,441.5 283.0,440.7 281.8,441.3 280.7,440.5 279.5,441.6 278.3,440.8 277.1,440.6 275.9,442.2 274.7,440.7 273.5,442.0 272.4,441.5 271.2,441.6 270.0,442.0 268.8,441.1 267.6,441.0 266.4,442.0 265.2,441.8 264.0,441.4 262.9,442.1 261.7,442.6 260.5,441.4 259.3,441.8 258.1,441.6 256.9,441.6 255.7,442.0 254.6,442.3 253.4,442.5 252.2,442.0 251.0,442.1 249.8,441.9 248.6,441.3 247.4,441.3 246.2,441.9 245.1,442.3 243.9,442.3 242.7,442.0 241.5,441.2 240.3,441.0 239.1,442.3 237.9,442.0 236.8,442.1 235.6,441.7 234.4,442.8 233.2,440.9 232.0,442.1 230.8,442.5 229.6,442.8 228.5,442.3 227.3,442.4 226.1,442.2 224.9,442.5 223.7,441.9 222.5,442.3 221.3,442.3 220.1,443.3 219.0,442.5 217.8,442.5 216.6,441.6 215.4,442.3 214.2,442.9 213.0,442.9 211.8,442.4 210.7,443.3 209.5,443.6 208.3,442.3 207.1,443.1 205.9,443.1 204.7,443.4 203.5,443.3 202.4,443.7 201.2,443.3 200.0,443.0 198.8,442.3 197.6,442.2 196.4,443.6 195.2,442.9 194.0,443.4 192.9,444.4 191.7,443.5 190.5,443.8 189.3,444.6 188.1,443.8 186.9,442.5 185.7,444.1 184.6,443.6 183.4,444.1 182.2,443.5 181.0,444.0 179.8,443.0 178.6,443.9 177.4,444.1 176.3,443.4 175.1,444.3 173.9,444.8 172.7,442.6 171.5,444.2 170.3,444.5 169.1,444.5 167.9,443.9 166.8,443.7 165.6,443.6 164.4,445.3 163.2,443.8 162.0,444.6 160.8,443.5 159.6,443.8 158.5,444.3 157.3,443.5 156.1,444.4 154.9,444.3 153.7,443.3 152.5,444.7 151.3,444.2 150.2,444.1 149.0,443.7 147.8,444.2 146.6,443.8 145.4,444.5 144.2,444.7 143.0,444.7 141.8,444.0 140.7,443.6 139.5,444.5 138.3,444.5 137.1,444.7 135.9,444.4 134.7,443.9 133.5,444.4 132.4,443.6 131.2,444.5 130.0,442.5 128.8,443.1 127.6,444.0 126.4,444.7 125.2,443.8 124.1,443.7 122.9,443.7 121.7,443.9 120.5,442.8 119.3,443.0 118.1,444.7 116.9,443.3 115.7,443.4 114.6,443.6 113.4,443.4 112.2,442.4 111.0,441.7 109.8,441.1 108.6,438.1 107.4,436.5 106.3,435.5 105.1,427.6 103.9,420.8 102.7,412.8 101.5,404.8" fill="#6d6d6d" fill-opacity="0.44"/>
<line x1="101.8" y1="420.3" x2="1299.5" y2="420.3" stroke="#7a7a7a" stroke-width="1.6"/>
<line x1="964.6" y1="348.4" x2="964.6" y2="432.4" stroke="#222" stroke-width="1" stroke-dasharray="2.5,1.6"/>
<rect x="131.2" y="348.4" width="12.3" height="84.0" fill="#a9a9a9" stroke="#333" stroke-width="1"/>
<rect x="131.2" y="348.4" width="12.3" height="84.0" fill="url(#hatch)"/>
<rect x="131.2" y="348.4" width="1.6" height="84.0" fill="#777"/>
<rect x="1271.2" y="348.4" width="7.3" height="84.0" fill="#a9a9a9" stroke="#333" stroke-width="1"/>
<rect x="1271.2" y="348.4" width="7.3" height="84.0" fill="url(#hatch)"/>
<rect x="1271.2" y="348.4" width="1.6" height="84.0" fill="#777"/>
<polyline points="102.1,392.9 104.3,391.4 106.4,405.7 109.3,370.7 111.4,392.1 113.6,397.9 115.7,365.7 117.9,416.4 119.3,379.3 120.7,430.7 122.9,385.7 125.0,412.1 126.4,429.3 128.6,416.4 130.0,397.9 132.1,405.0 135.0,365.0 137.1,430.7 139.3,420.7 141.4,363.6 142.9,349.3 143.6,405.0 145.7,370.7 148.6,430.7 151.4,403.6 153.6,432.1 155.0,396.4 157.1,427.9 159.3,399.3 162.9,395.0 165.7,383.6 167.9,366.4 170.0,402.1 172.1,422.1 174.3,416.4 176.4,375.0 177.9,413.6 179.3,390.7 181.4,432.1 184.3,405.0 185.7,419.3 187.1,402.1 190.0,413.6 191.4,392.1 192.9,417.9 196.4,358.6 199.3,432.1 200.7,405.0 202.1,415.0 203.6,372.9 205.7,405.0 208.6,372.1 210.7,416.4 213.6,402.1 214.3,407.9 217.1,380.7 219.3,407.9 221.4,403.6 225.7,432.1 229.3,392.1 231.4,432.1 235.0,405.0 237.1,389.3 239.3,382.1 241.4,415.0 245.0,367.9 247.9,405.0 250.7,374.3 252.9,419.3 255.7,392.1 257.9,430.7 259.3,383.6 261.4,423.6 264.3,407.9 267.9,380.7 271.4,423.6 273.6,427.9 277.1,397.1 279.3,412.1 281.4,399.3 284.3,402.1 286.4,406.4 290.0,394.3 292.1,419.3 293.6,402.1 296.4,430.7 299.3,394.3 300.0,395.0 301.7,425.0 303.6,394.3 306.4,374.3 308.6,406.4 310.0,402.1 311.1,407.1 312.9,395.7 315.0,429.3 317.1,397.9 318.6,416.4 322.1,389.3 323.6,412.1 325.7,402.1 327.1,407.9 328.6,400.7 330.0,410.0 331.7,387.1 335.0,422.1 336.9,385.0 338.6,403.6 342.1,398.6 344.3,409.3 347.1,407.9 349.3,416.4 351.4,403.6 353.1,423.6 355.0,405.0 356.9,429.3 358.6,413.6 361.4,402.1 362.9,413.6 365.0,400.7 368.6,416.4 371.7,376.4 374.3,390.7 376.4,416.4 378.3,399.3 380.7,412.1 382.6,382.9 385.0,413.6 387.1,407.9 390.7,395.0 392.1,409.3 393.6,399.3 395.7,402.1 398.6,395.0 400.0,401.4 402.1,389.3 405.4,420.0 409.3,400.0 411.4,415.0 414.0,396.4 416.0,421.4 419.3,403.6 424.3,416.4 425.7,409.3 427.9,412.1 430.0,382.1 431.4,395.0 433.6,382.1 435.7,403.6 438.6,412.9 442.1,381.4 444.6,402.1 446.0,403.6 448.6,417.1 450.0,416.4 453.1,397.9 455.0,392.1 458.6,412.1 462.1,399.3 465.7,383.6 469.3,409.3 471.4,410.7 472.9,417.9 475.0,412.1 477.9,409.3 480.0,412.9 482.6,396.4 484.3,407.9 487.1,397.1 490.0,412.9 492.9,390.0 496.4,407.9 499.7,392.1 501.7,399.3 503.6,415.0 505.7,409.3 508.6,377.9 510.7,390.7 513.6,410.7 515.4,412.1 517.9,402.1 520.0,397.9 522.9,422.9 525.4,389.3 527.9,409.3 529.3,399.3 530.0,410.7 531.7,397.9 533.6,407.9 537.9,402.1 540.0,406.4 541.4,404.3 542.9,407.9 545.7,415.0 548.9,387.9 550.7,410.7 553.6,416.4 555.7,395.0 558.3,420.0 560.0,402.1 562.1,393.6 563.6,402.1 565.4,387.1 568.6,409.3 571.4,420.7 573.1,405.0 575.0,402.1 577.1,395.7 579.3,407.9 582.1,395.0 585.4,393.6 587.9,410.7 590.7,397.9 591.4,413.6 594.0,392.1 596.0,412.1 598.6,396.4 601.4,415.0 603.6,397.9 605.7,409.3 607.9,415.0 610.3,394.3 612.1,402.1 615.0,421.4 617.1,399.3 620.0,425.0 622.1,402.1 623.6,395.0 625.7,407.9 627.1,394.3 628.6,410.7 630.7,410.0 631.7,392.1 634.0,416.4 635.7,395.0 637.9,399.3 639.3,393.6 641.4,392.9 643.1,407.9 645.0,398.6 647.1,416.4 649.3,399.3 651.7,417.9 654.3,386.4 656.4,395.0 657.9,412.1 660.0,403.6 662.6,388.6 664.3,405.0 666.4,377.9 667.9,407.9 670.0,413.6 671.9,393.6 673.1,420.0 674.6,383.6 677.1,414.3 678.6,398.6 680.7,394.3 683.6,395.0 686.4,412.1 690.7,389.3 692.9,406.4 695.0,391.4 697.9,409.3 699.7,392.1 701.7,407.9 703.6,400.0 706.0,407.1 707.9,394.3 710.7,400.7 713.6,406.4 715.0,410.0 716.4,391.4 717.9,406.4 719.7,421.4 721.4,410.7 723.6,395.0 725.0,402.9 727.9,385.7 730.7,395.0 732.9,397.9 734.3,400.7 736.4,398.6 737.9,403.6 739.7,398.6 741.7,383.6 743.6,402.1 745.0,396.4 747.1,399.3 749.3,405.0 750.7,397.9 752.9,391.4 755.7,408.6 758.6,397.9 760.0,400.7 762.9,402.1 765.0,398.6 768.6,403.6 770.7,402.1 772.1,406.4 774.3,402.1 777.1,406.4 779.3,402.1 781.4,392.9 782.9,405.0 784.3,395.0 786.4,407.9 789.3,402.1 790.7,415.0 793.6,394.3 795.0,403.6 797.1,393.6 800.0,413.6 801.7,402.1 803.6,401.4 806.0,388.6 807.4,409.3 809.3,409.3 811.4,405.0 812.1,410.7 813.6,395.0 815.0,405.0 817.1,393.6 820.7,405.0 822.9,415.7 825.7,403.6 827.9,405.0 830.7,402.1 833.6,405.0 837.1,390.7 839.3,409.3 841.4,394.3 843.6,406.4 845.7,400.7 848.6,396.4 851.4,402.1 852.9,403.6 855.7,416.4 858.6,413.6 862.1,401.4 864.3,410.7 865.7,409.3 867.9,394.3 870.0,412.1 873.6,393.6 875.7,402.1 878.6,412.9 881.4,403.6 884.6,415.0 887.1,405.0 889.3,388.6 892.1,407.9 895.7,395.0 899.7,383.6 902.9,398.6 905.0,389.3 907.9,400.0 910.0,390.7 913.6,391.4 915.0,400.7 916.9,390.0 918.6,402.9 920.7,395.0 923.6,381.4 925.7,392.1 928.6,407.1 932.1,391.4 935.0,402.9 937.1,387.9 938.9,407.1 940.7,394.3 942.9,403.6 945.4,387.9 947.1,404.3 949.3,395.0 950.7,399.3 952.9,384.3 955.0,400.0 957.1,389.3 958.9,397.9 960.7,387.9 963.6,376.4 965.4,380.7 967.1,378.6 968.6,398.6 971.4,395.0 974.3,405.7 977.1,406.4 978.6,397.9 980.7,405.0 982.9,393.6 985.0,392.1 986.4,387.9 988.6,382.9 990.3,402.1 992.6,392.1 995.0,401.4 998.6,392.1 1000.7,407.9 1002.9,393.6 1005.7,394.3 1007.9,388.6 1009.3,398.6 1012.1,387.9 1014.3,400.0 1017.1,380.0 1019.3,393.6 1021.4,383.6 1023.6,397.9 1025.7,390.7 1027.9,394.3 1030.7,390.7 1032.9,400.0 1035.0,392.1 1037.1,393.6 1040.7,392.1 1044.3,385.7 1046.4,402.1 1048.6,396.4 1050.0,402.1 1052.9,391.4 1055.0,382.1 1057.9,400.0 1059.7,394.3 1062.6,406.4 1065.7,392.1 1068.6,386.4 1071.4,392.1 1074.3,394.3 1077.1,386.4 1079.3,400.7 1081.4,395.7 1083.6,402.9 1086.4,389.3 1089.3,407.1 1092.1,385.0 1095.0,398.6 1098.6,409.3 1099.7,392.1 1101.7,382.1 1103.6,402.1 1105.4,392.9 1107.9,404.3 1110.7,397.1 1114.3,402.9 1115.7,391.4 1117.1,410.7 1119.3,392.9 1121.4,395.7 1123.6,397.9 1125.7,402.1 1127.9,392.9 1129.3,397.1 1131.7,382.9 1134.3,405.0 1136.4,396.4 1139.3,393.6 1141.4,387.9 1143.6,396.4 1145.0,385.0 1146.9,407.1 1148.6,385.0 1150.7,400.7 1152.9,382.9 1155.0,397.9 1157.9,389.3 1160.0,386.4 1162.9,392.9 1165.0,395.0 1166.9,375.7 1168.6,399.3 1171.1,405.0 1173.1,380.7 1175.0,387.9 1177.9,392.1 1182.1,401.4 1185.0,385.0 1187.4,392.1 1190.3,400.0 1194.0,388.6 1196.0,397.9 1198.6,389.3 1200.7,398.6 1204.3,392.1 1208.6,381.4 1211.4,398.6 1214.3,380.7 1216.4,391.4 1218.6,383.6 1220.7,398.6 1222.9,385.7 1225.0,398.6 1227.1,386.4 1229.3,400.0 1232.1,390.0 1235.7,398.6 1238.6,389.3 1240.7,392.1 1243.6,382.9 1245.7,398.6 1247.9,390.7 1250.7,401.4 1253.6,388.6 1257.1,387.9 1260.0,379.3 1262.9,395.0 1266.4,377.9 1269.3,397.9 1272.1,380.0 1273.6,403.6 1277.1,385.7 1279.3,395.0 1282.1,392.1 1284.3,386.4 1287.1,393.6 1290.7,383.6 1292.9,392.1 1295.0,385.7 1298.6,398.6 1299.7,397.9" fill="none" stroke="#0000ff" stroke-width="1.3" stroke-linejoin="round"/>
</g>
<rect x="101.8" y="348.4" width="1197.7" height="84.0" fill="none" stroke="#333" stroke-width="1"/>
<line x1="111.00" y1="432.4" x2="111.00" y2="435.4" stroke="#333" stroke-width="1"/>
<text x="111.00" y="446.90" font-family='"Liberation Sans", sans-serif' font-size="9.2" fill="#000" text-anchor="middle" textLength="23.50" lengthAdjust="spacingAndGlyphs" >3500</text>
<line x1="170.32" y1="432.4" x2="170.32" y2="435.4" stroke="#333" stroke-width="1"/>
<text x="170.32" y="446.90" font-family='"Liberation Sans", sans-serif' font-size="9.2" fill="#000" text-anchor="middle" textLength="23.50" lengthAdjust="spacingAndGlyphs" >3600</text>
<line x1="229.64" y1="432.4" x2="229.64" y2="435.4" stroke="#333" stroke-width="1"/>
<text x="229.64" y="446.90" font-family='"Liberation Sans", sans-serif' font-size="9.2" fill="#000" text-anchor="middle" textLength="23.50" lengthAdjust="spacingAndGlyphs" >3700</text>
<line x1="288.96" y1="432.4" x2="288.96" y2="435.4" stroke="#333" stroke-width="1"/>
<text x="288.96" y="446.90" font-family='"Liberation Sans", sans-serif' font-size="9.2" fill="#000" text-anchor="middle" textLength="23.50" lengthAdjust="spacingAndGlyphs" >3800</text>
<line x1="348.28" y1="432.4" x2="348.28" y2="435.4" stroke="#333" stroke-width="1"/>
<text x="348.28" y="446.90" font-family='"Liberation Sans", sans-serif' font-size="9.2" fill="#000" text-anchor="middle" textLength="23.50" lengthAdjust="spacingAndGlyphs" >3900</text>
<line x1="407.60" y1="432.4" x2="407.60" y2="435.4" stroke="#333" stroke-width="1"/>
<text x="407.60" y="446.90" font-family='"Liberation Sans", sans-serif' font-size="9.2" fill="#000" text-anchor="middle" textLength="23.50" lengthAdjust="spacingAndGlyphs" >4000</text>
<line x1="466.92" y1="432.4" x2="466.92" y2="435.4" stroke="#333" stroke-width="1"/>
<text x="466.92" y="446.90" font-family='"Liberation Sans", sans-serif' font-size="9.2" fill="#000" text-anchor="middle" textLength="23.50" lengthAdjust="spacingAndGlyphs" >4100</text>
<line x1="526.24" y1="432.4" x2="526.24" y2="435.4" stroke="#333" stroke-width="1"/>
<text x="526.24" y="446.90" font-family='"Liberation Sans", sans-serif' font-size="9.2" fill="#000" text-anchor="middle" textLength="23.50" lengthAdjust="spacingAndGlyphs" >4200</text>
<line x1="585.56" y1="432.4" x2="585.56" y2="435.4" stroke="#333" stroke-width="1"/>
<text x="585.56" y="446.90" font-family='"Liberation Sans", sans-serif' font-size="9.2" fill="#000" text-anchor="middle" textLength="23.50" lengthAdjust="spacingAndGlyphs" >4300</text>
<line x1="644.88" y1="432.4" x2="644.88" y2="435.4" stroke="#333" stroke-width="1"/>
<text x="644.88" y="446.90" font-family='"Liberation Sans", sans-serif' font-size="9.2" fill="#000" text-anchor="middle" textLength="23.50" lengthAdjust="spacingAndGlyphs" >4400</text>
<line x1="704.20" y1="432.4" x2="704.20" y2="435.4" stroke="#333" stroke-width="1"/>
<text x="704.20" y="446.90" font-family='"Liberation Sans", sans-serif' font-size="9.2" fill="#000" text-anchor="middle" textLength="23.50" lengthAdjust="spacingAndGlyphs" >4500</text>
<line x1="763.52" y1="432.4" x2="763.52" y2="435.4" stroke="#333" stroke-width="1"/>
<text x="763.52" y="446.90" font-family='"Liberation Sans", sans-serif' font-size="9.2" fill="#000" text-anchor="middle" textLength="23.50" lengthAdjust="spacingAndGlyphs" >4600</text>
<line x1="822.84" y1="432.4" x2="822.84" y2="435.4" stroke="#333" stroke-width="1"/>
<text x="822.84" y="446.90" font-family='"Liberation Sans", sans-serif' font-size="9.2" fill="#000" text-anchor="middle" textLength="23.50" lengthAdjust="spacingAndGlyphs" >4700</text>
<line x1="882.16" y1="432.4" x2="882.16" y2="435.4" stroke="#333" stroke-width="1"/>
<text x="882.16" y="446.90" font-family='"Liberation Sans", sans-serif' font-size="9.2" fill="#000" text-anchor="middle" textLength="23.50" lengthAdjust="spacingAndGlyphs" >4800</text>
<line x1="941.48" y1="432.4" x2="941.48" y2="435.4" stroke="#333" stroke-width="1"/>
<text x="941.48" y="446.90" font-family='"Liberation Sans", sans-serif' font-size="9.2" fill="#000" text-anchor="middle" textLength="23.50" lengthAdjust="spacingAndGlyphs" >4900</text>
<line x1="1000.80" y1="432.4" x2="1000.80" y2="435.4" stroke="#333" stroke-width="1"/>
<text x="1000.80" y="446.90" font-family='"Liberation Sans", sans-serif' font-size="9.2" fill="#000" text-anchor="middle" textLength="23.50" lengthAdjust="spacingAndGlyphs" >5000</text>
<line x1="1060.12" y1="432.4" x2="1060.12" y2="435.4" stroke="#333" stroke-width="1"/>
<text x="1060.12" y="446.90" font-family='"Liberation Sans", sans-serif' font-size="9.2" fill="#000" text-anchor="middle" textLength="23.50" lengthAdjust="spacingAndGlyphs" >5100</text>
<line x1="1119.44" y1="432.4" x2="1119.44" y2="435.4" stroke="#333" stroke-width="1"/>
<text x="1119.44" y="446.90" font-family='"Liberation Sans", sans-serif' font-size="9.2" fill="#000" text-anchor="middle" textLength="23.50" lengthAdjust="spacingAndGlyphs" >5200</text>
<line x1="1178.76" y1="432.4" x2="1178.76" y2="435.4" stroke="#333" stroke-width="1"/>
<text x="1178.76" y="446.90" font-family='"Liberation Sans", sans-serif' font-size="9.2" fill="#000" text-anchor="middle" textLength="23.50" lengthAdjust="spacingAndGlyphs" >5300</text>
<line x1="1238.08" y1="432.4" x2="1238.08" y2="435.4" stroke="#333" stroke-width="1"/>
<text x="1238.08" y="446.90" font-family='"Liberation Sans", sans-serif' font-size="9.2" fill="#000" text-anchor="middle" textLength="23.50" lengthAdjust="spacingAndGlyphs" >5400</text>
<line x1="1297.40" y1="432.4" x2="1297.40" y2="435.4" stroke="#333" stroke-width="1"/>
<text x="1297.40" y="446.90" font-family='"Liberation Sans", sans-serif' font-size="9.2" fill="#000" text-anchor="middle" textLength="23.50" lengthAdjust="spacingAndGlyphs" >5500</text>
<line x1="98.8" y1="420.30" x2="101.8" y2="420.30" stroke="#333" stroke-width="1"/>
<text x="94.80" y="423.60" font-family='"Liberation Sans", sans-serif' font-size="9.2" fill="#000" text-anchor="end" textLength="5.80" lengthAdjust="spacingAndGlyphs" >0</text>
<line x1="98.8" y1="378.60" x2="101.8" y2="378.60" stroke="#333" stroke-width="1"/>
<text x="94.80" y="381.90" font-family='"Liberation Sans", sans-serif' font-size="9.2" fill="#000" text-anchor="end" textLength="5.80" lengthAdjust="spacingAndGlyphs" >5</text>
<text x="111.50" y="346.10" font-family='"Liberation Sans", sans-serif' font-size="9.6" fill="#000" text-anchor="start" >e</text>
<text x="117.50" y="341.60" font-family='"Liberation Sans", sans-serif' font-size="6.6" fill="#000" text-anchor="start" textLength="9.00" lengthAdjust="spacingAndGlyphs" >−17</text>
<text x="127.00" y="346.10" font-family='"Liberation Sans", sans-serif' font-size="9.6" fill="#000" text-anchor="start" textLength="11.00" lengthAdjust="spacingAndGlyphs" >x2</text>
<text x="138.90" y="346.10" font-family='"Liberation Sans", sans-serif' font-size="9.6" fill="#000" text-anchor="start" textLength="9.50" lengthAdjust="spacingAndGlyphs" font-style="italic" >Å</text>
<text transform="translate(116.9,332.0) rotate(90)" font-family='"Liberation Sans", sans-serif' font-size="10" fill="#87ceeb" fill-opacity="0.9" text-anchor="middle">MgII</text>
<path d="M115.9 348.2Q115.9 346.0 118.0 346.0H119.5Q120.5 346.0 120.5 344.5Q120.5 346.0 121.5 346.0H123.0Q125.1 346.0 125.1 348.2" fill="none" stroke="#87ceeb" stroke-opacity="0.9" stroke-width="1"/>
<text transform="translate(177.2,330.0) rotate(90)" font-family='"Liberation Sans", sans-serif' font-size="10" fill="#800080" fill-opacity="1" text-anchor="middle">SiIV</text>
<path d="M176.2 348.2Q176.2 346.0 178.3 346.0H179.8Q180.8 346.0 180.8 344.5Q180.8 346.0 181.8 346.0H183.3Q185.4 346.0 185.4 348.2" fill="none" stroke="#800080" stroke-opacity="1" stroke-width="1"/>
<text transform="translate(201.8,331.4) rotate(90)" font-family='"Liberation Sans", sans-serif' font-size="10" fill="#ffa500" fill-opacity="1" text-anchor="middle">Lyα</text>
<path d="M200.8 348.2Q200.8 346.0 202.9 346.0H204.4Q205.4 346.0 205.4 344.5Q205.4 346.0 206.4 346.0H207.9Q210.0 346.0 210.0 348.2" fill="none" stroke="#ffa500" stroke-opacity="1" stroke-width="1"/>
<text transform="translate(230.9,330.0) rotate(90)" font-family='"Liberation Sans", sans-serif' font-size="10" fill="#008000" fill-opacity="1" text-anchor="middle">MgII</text>
<path d="M229.9 348.2Q229.9 346.0 232.0 346.0H233.5Q234.5 346.0 234.5 344.5Q234.5 346.0 235.5 346.0H237.0Q239.1 346.0 239.1 348.2" fill="none" stroke="#008000" stroke-opacity="1" stroke-width="1"/>
<text transform="translate(247.9,326.5) rotate(90)" font-family='"Liberation Sans", sans-serif' font-size="10" fill="#ffa500" fill-opacity="1" text-anchor="middle">NV</text>
<path d="M246.9 348.2Q246.9 346.0 249.0 346.0H250.5Q251.5 346.0 251.5 344.5Q251.5 346.0 252.5 346.0H254.0Q256.1 346.0 256.1 348.2" fill="none" stroke="#ffa500" stroke-opacity="1" stroke-width="1"/>
<text transform="translate(278.4,329.6) rotate(90)" font-family='"Liberation Sans", sans-serif' font-size="10" fill="#0000ff" fill-opacity="1" text-anchor="middle">OII</text>
<path d="M277.4 348.2Q277.4 346.0 279.5 346.0H281.0Q282.0 346.0 282.0 344.5Q282.0 346.0 283.0 346.0H284.5Q286.6 346.0 286.6 348.2" fill="none" stroke="#0000ff" stroke-opacity="1" stroke-width="1"/>
<text transform="translate(288.5,331.9) rotate(90)" font-family='"Liberation Sans", sans-serif' font-size="10" fill="#ffa500" fill-opacity="1" text-anchor="middle">SiII</text>
<path d="M287.5 348.2Q287.5 346.0 289.6 346.0H291.1Q292.1 346.0 292.1 344.5Q292.1 346.0 293.1 346.0H294.6Q296.7 346.0 296.7 348.2" fill="none" stroke="#ffa500" stroke-opacity="1" stroke-width="1"/>
<text transform="translate(329.0,331.4) rotate(90)" font-family='"Liberation Sans", sans-serif' font-size="10" fill="#8a2be2" fill-opacity="1" text-anchor="middle">Lyα</text>
<path d="M328.0 348.2Q328.0 346.0 330.1 346.0H331.6Q332.6 346.0 332.6 344.5Q332.6 346.0 333.6 346.0H335.1Q337.2 346.0 337.2 348.2" fill="none" stroke="#8a2be2" stroke-opacity="1" stroke-width="1"/>
<text transform="translate(378.1,326.5) rotate(90)" font-family='"Liberation Sans", sans-serif' font-size="10" fill="#8a2be2" fill-opacity="1" text-anchor="middle">NV</text>
<path d="M377.1 348.2Q377.1 346.0 379.2 346.0H380.7Q381.7 346.0 381.7 344.5Q381.7 346.0 382.7 346.0H384.2Q386.3 346.0 386.3 348.2" fill="none" stroke="#8a2be2" stroke-opacity="1" stroke-width="1"/>
<text transform="translate(409.7,327.8) rotate(90)" font-family='"Liberation Sans", sans-serif' font-size="10" fill="#800080" fill-opacity="1" text-anchor="middle">CIV</text>
<path d="M408.7 348.2Q408.7 346.0 410.8 346.0H412.3Q413.3 346.0 413.3 344.5Q413.3 346.0 414.3 346.0H415.8Q417.9 346.0 417.9 348.2" fill="none" stroke="#800080" stroke-opacity="1" stroke-width="1"/>
<text transform="translate(420.6,332.3) rotate(90)" font-family='"Liberation Sans", sans-serif' font-size="10" fill="#8a2be2" fill-opacity="1" text-anchor="middle">SiII</text>
<path d="M419.6 348.2Q419.6 346.0 421.7 346.0H423.2Q424.2 346.0 424.2 344.5Q424.2 346.0 425.2 346.0H426.7Q428.8 346.0 428.8 348.2" fill="none" stroke="#8a2be2" stroke-opacity="1" stroke-width="1"/>
<text transform="translate(465.4,329.7) rotate(90)" font-family='"Liberation Sans", sans-serif' font-size="10" fill="#ff00ff" fill-opacity="1" text-anchor="middle">CII</text>
<path d="M464.4 348.2Q464.4 346.0 466.5 346.0H468.0Q469.0 346.0 469.0 344.5Q469.0 346.0 470.0 346.0H471.5Q473.6 346.0 473.6 348.2" fill="none" stroke="#ff00ff" stroke-opacity="1" stroke-width="1"/>
<text transform="translate(525.9,327.9) rotate(90)" font-family='"Liberation Sans", sans-serif' font-size="10" fill="#ff0000" fill-opacity="1" text-anchor="middle">OVI</text>
<path d="M524.9 348.2Q524.9 346.0 527.0 346.0H528.5Q529.5 346.0 529.5 344.5Q529.5 346.0 530.5 346.0H532.0Q534.1 346.0 534.1 348.2" fill="none" stroke="#ff0000" stroke-opacity="1" stroke-width="1"/>
<text transform="translate(549.7,329.6) rotate(90)" font-family='"Liberation Sans", sans-serif' font-size="10" fill="#800080" fill-opacity="1" text-anchor="middle">HeII</text>
<path d="M548.7 348.2Q548.7 346.0 550.8 346.0H552.3Q553.3 346.0 553.3 344.5Q553.3 346.0 554.3 346.0H555.8Q557.9 346.0 557.9 348.2" fill="none" stroke="#800080" stroke-opacity="1" stroke-width="1"/>
<text transform="translate(647.4,334.6) rotate(90)" font-family='"Liberation Sans", sans-serif' font-size="10" fill="#0000ff" fill-opacity="1" text-anchor="middle">Hγ</text>
<path d="M646.4 348.2Q646.4 346.0 648.5 346.0H650.0Q651.0 346.0 651.0 344.5Q651.0 346.0 652.0 346.0H653.5Q655.6 346.0 655.6 348.2" fill="none" stroke="#0000ff" stroke-opacity="1" stroke-width="1"/>
<text transform="translate(674.9,330.4) rotate(90)" font-family='"Liberation Sans", sans-serif' font-size="10" fill="#8a2be2" fill-opacity="1" text-anchor="middle">SiIV</text>
<path d="M673.9 348.2Q673.9 346.0 676.0 346.0H677.5Q678.5 346.0 678.5 344.5Q678.5 346.0 679.5 346.0H681.0Q683.1 346.0 683.1 348.2" fill="none" stroke="#8a2be2" stroke-opacity="1" stroke-width="1"/>
<text transform="translate(784.4,329.5) rotate(90)" font-family='"Liberation Sans", sans-serif' font-size="10" fill="#87ceeb" fill-opacity="1" text-anchor="middle">OII</text>
<path d="M783.4 348.2Q783.4 346.0 785.5 346.0H787.0Q788.0 346.0 788.0 344.5Q788.0 346.0 789.0 346.0H790.5Q792.6 346.0 792.6 348.2" fill="none" stroke="#87ceeb" stroke-opacity="1" stroke-width="1"/>
<text transform="translate(799.0,328.3) rotate(90)" font-family='"Liberation Sans", sans-serif' font-size="10" fill="#ffa500" fill-opacity="1" text-anchor="middle">CIV</text>
<path d="M798.0 348.2Q798.0 346.0 800.1 346.0H801.6Q802.6 346.0 802.6 344.5Q802.6 346.0 803.6 346.0H805.1Q807.2 346.0 807.2 348.2" fill="none" stroke="#ffa500" stroke-opacity="1" stroke-width="1"/>
<text transform="translate(807.7,329.5) rotate(90)" font-family='"Liberation Sans", sans-serif' font-size="10" fill="#87ceeb" fill-opacity="1" text-anchor="middle">OII</text>
<path d="M806.7 348.2Q806.7 346.0 808.8 346.0H810.3Q811.3 346.0 811.3 344.5Q811.3 346.0 812.3 346.0H813.8Q815.9 346.0 815.9 348.2" fill="none" stroke="#87ceeb" stroke-opacity="1" stroke-width="1"/>
<text transform="translate(1021.9,326.7) rotate(90)" font-family='"Liberation Sans", sans-serif' font-size="10" fill="#ff0000" fill-opacity="1" text-anchor="middle">NV</text>
<path d="M1020.9 348.2Q1020.9 346.0 1023.0 346.0H1024.5Q1025.5 346.0 1025.5 344.5Q1025.5 346.0 1026.5 346.0H1028.0Q1030.1 346.0 1030.1 348.2" fill="none" stroke="#ff0000" stroke-opacity="1" stroke-width="1"/>
<text transform="translate(1049.1,331.4) rotate(90)" font-family='"Liberation Sans", sans-serif' font-size="10" fill="#0000ff" fill-opacity="1" text-anchor="middle">OIII</text>
<path d="M1048.1 348.2Q1048.1 346.0 1050.2 346.0H1051.7Q1052.7 346.0 1052.7 344.5Q1052.7 346.0 1053.7 346.0H1055.2Q1057.3 346.0 1057.3 348.2" fill="none" stroke="#0000ff" stroke-opacity="1" stroke-width="1"/>
<text transform="translate(1075.8,332.5) rotate(90)" font-family='"Liberation Sans", sans-serif' font-size="10" fill="#ff0000" fill-opacity="1" text-anchor="middle">SiII</text>
<path d="M1074.8 348.2Q1074.8 346.0 1076.9 346.0H1078.4Q1079.4 346.0 1079.4 344.5Q1079.4 346.0 1080.4 346.0H1081.9Q1084.0 346.0 1084.0 348.2" fill="none" stroke="#ff0000" stroke-opacity="1" stroke-width="1"/>
<text transform="translate(1132.6,329.5) rotate(90)" font-family='"Liberation Sans", sans-serif' font-size="10" fill="#8a2be2" fill-opacity="1" text-anchor="middle">HeII</text>
<path d="M1131.6 348.2Q1131.6 346.0 1133.7 346.0H1135.2Q1136.2 346.0 1136.2 344.5Q1136.2 346.0 1137.2 346.0H1138.7Q1140.8 346.0 1140.8 348.2" fill="none" stroke="#8a2be2" stroke-opacity="1" stroke-width="1"/>
<text transform="translate(1236.2,333.9) rotate(90)" font-family='"Liberation Sans", sans-serif' font-size="10" fill="#87ceeb" fill-opacity="1" text-anchor="middle">Hγ</text>
<path d="M1235.2 348.2Q1235.2 346.0 1237.3 346.0H1238.8Q1239.8 346.0 1239.8 344.5Q1239.8 346.0 1240.8 346.0H1242.3Q1244.4 346.0 1244.4 348.2" fill="none" stroke="#87ceeb" stroke-opacity="1" stroke-width="1"/>
<text transform="translate(1263.9,333.9) rotate(90)" font-family='"Liberation Sans", sans-serif' font-size="10" fill="#87ceeb" fill-opacity="1" text-anchor="middle">Hγ</text>
<path d="M1262.9 348.2Q1262.9 346.0 1265.0 346.0H1266.5Q1267.5 346.0 1267.5 344.5Q1267.5 346.0 1268.5 346.0H1270.0Q1272.1 346.0 1272.1 348.2" fill="none" stroke="#87ceeb" stroke-opacity="1" stroke-width="1"/>
<text transform="translate(527.8,288.2) rotate(90)" font-family='"Liberation Sans", sans-serif' font-size="10" fill="#ffa500" fill-opacity="1" text-anchor="middle">SiIV</text>
<path d="M526.8 306.0Q526.8 303.8 528.9 303.8H530.4Q531.4 303.8 531.4 302.3Q531.4 303.8 532.4 303.8H533.9Q536.0 303.8 536.0 306.0" fill="none" stroke="#ffa500" stroke-opacity="1" stroke-width="1"/>
<text transform="translate(547.9,287.1) rotate(90)" font-family='"Liberation Sans", sans-serif' font-size="10" fill="#4169e1" fill-opacity="1" text-anchor="middle">OII</text>
<path d="M546.9 306.0Q546.9 303.8 549.0 303.8H550.5Q551.5 303.8 551.5 302.3Q551.5 303.8 552.5 303.8H554.0Q556.1 303.8 556.1 306.0" fill="none" stroke="#4169e1" stroke-opacity="1" stroke-width="1"/>
<text transform="translate(1020.9,288.9) rotate(90)" font-family='"Liberation Sans", sans-serif' font-size="10" fill="#0000ff" fill-opacity="1" text-anchor="middle">OIII</text>
<path d="M1019.9 306.0Q1019.9 303.8 1022.0 303.8H1023.5Q1024.5 303.8 1024.5 302.3Q1024.5 303.8 1025.5 303.8H1027.0Q1029.1 303.8 1029.1 306.0" fill="none" stroke="#0000ff" stroke-opacity="1" stroke-width="1"/>
<rect x="429.0" y="450.3" width="17.2" height="6.2" fill="#ff0000"/>
<text x="452.50" y="456.30" font-family='"Liberation Sans", sans-serif' font-size="8.2" fill="#222" text-anchor="start" >Lyα</text>
<rect x="483.0" y="450.3" width="17.2" height="6.2" fill="#008000"/>
<text x="506.50" y="456.30" font-family='"Liberation Sans", sans-serif' font-size="8.2" fill="#222" text-anchor="start" >OII</text>
<rect x="536.0" y="450.3" width="17.2" height="6.2" fill="#8a2be2"/>
<text x="559.50" y="456.30" font-family='"Liberation Sans", sans-serif' font-size="8.2" fill="#222" text-anchor="start" >CIV</text>
<rect x="591.0" y="450.3" width="17.2" height="6.2" fill="#800080"/>
<text x="614.50" y="456.30" font-family='"Liberation Sans", sans-serif' font-size="8.2" fill="#222" text-anchor="start" >CIII</text>
<rect x="642.6" y="450.3" width="17.2" height="6.2" fill="#ff00ff"/>
<text x="666.10" y="456.30" font-family='"Liberation Sans", sans-serif' font-size="8.2" fill="#222" text-anchor="start" >MgII</text>
<rect x="698.1" y="450.3" width="17.2" height="6.2" fill="#0000ff"/>
<text x="721.60" y="456.30" font-family='"Liberation Sans", sans-serif' font-size="8.2" fill="#222" text-anchor="start" >Hβ</text>
<rect x="748.5" y="450.3" width="17.2" height="6.2" fill="#4169e1"/>
<text x="772.00" y="456.30" font-family='"Liberation Sans", sans-serif' font-size="8.2" fill="#222" text-anchor="start" >Hγ</text>
<rect x="799.3" y="450.3" width="17.2" height="6.2" fill="#ffa500"/>
<text x="822.80" y="456.30" font-family='"Liberation Sans", sans-serif' font-size="8.2" fill="#222" text-anchor="start" >HeII</text>
<rect x="853.9" y="450.3" width="17.2" height="6.2" fill="#87ceeb"/>
<text x="877.40" y="456.30" font-family='"Liberation Sans", sans-serif' font-size="8.2" fill="#222" text-anchor="start" >(K)CaII</text>
<rect x="919.9" y="450.3" width="17.2" height="6.2" fill="#87ceeb"/>
<text x="943.40" y="456.30" font-family='"Liberation Sans", sans-serif' font-size="8.2" fill="#222" text-anchor="start" >(H)CaII</text>
<defs>
<filter id="fhsc1" filterUnits="userSpaceOnUse" x="69.7" y="532.6" width="148.60000000000002" height="148.19999999999993" color-interpolation-filters="sRGB"><feGaussianBlur in="SourceGraphic" stdDeviation="1.4" result="s"/><feTurbulence type="fractalNoise" baseFrequency="0.9" numOctaves="1" seed="51" result="t"/><feColorMatrix in="t" type="matrix" values="1 0 0 0 0  1 0 0 0 0  1 0 0 0 0  0 0 0 0 1" result="g"/><feFlood x="70" y="533" width="1" height="1" flood-color="#000" result="f"/><feComposite in="f" in2="f" operator="over" x="69" y="532" width="3" height="3" result="fc"/><feTile in="fc" result="tile"/><feComposite in="g" in2="tile" operator="in" result="samp"/><feMorphology in="samp" operator="dilate" radius="1.0" result="blk"/><feComposite in="s" in2="blk" operator="arithmetic" k1="0" k2="1" k3="0.95" k4="-0.475"/></filter>
<filter id="fhsc3" filterUnits="userSpaceOnUse" x="440.9" y="532.6" width="147.70000000000005" height="148.19999999999993" color-interpolation-filters="sRGB"><feGaussianBlur in="SourceGraphic" stdDeviation="1.4" result="s"/><feTurbulence type="fractalNoise" baseFrequency="0.9" numOctaves="1" seed="53" result="t"/><feColorMatrix in="t" type="matrix" values="1 0 0 0 0  1 0 0 0 0  1 0 0 0 0  0 0 0 0 1" result="g"/><feFlood x="441" y="533" width="1" height="1" flood-color="#000" result="f"/><feComposite in="f" in2="f" operator="over" x="440" y="532" width="3" height="3" result="fc"/><feTile in="fc" result="tile"/><feComposite in="g" in2="tile" operator="in" result="samp"/><feMorphology in="samp" operator="dilate" radius="1.0" result="blk"/><feComposite in="s" in2="blk" operator="arithmetic" k1="0" k2="1" k3="0.95" k4="-0.475"/></filter>
<filter id="blr1" x="-30%" y="-30%" width="160%" height="160%"><feGaussianBlur stdDeviation="1.6"/></filter>
<filter id="blr2" filterUnits="userSpaceOnUse" x="255" y="532" width="150" height="150"><feGaussianBlur stdDeviation="1.8"/></filter>
<clipPath id="cp1"><rect x="69.7" y="532.6" width="148.6" height="148.2"/></clipPath>
<clipPath id="cp2"><rect x="255.3" y="532.6" width="148.6" height="148.2"/></clipPath>
<clipPath id="cp3"><rect x="440.9" y="532.6" width="147.7" height="148.2"/></clipPath>
</defs>
<text x="144.00" y="525.90" font-family='"Liberation Sans", sans-serif' font-size="12.6" fill="#000" text-anchor="middle" textLength="92.00" lengthAdjust="spacingAndGlyphs" >Fiber Positions</text>
<g filter="url(#fhsc1)"><rect x="69.7" y="532.6" width="148.6" height="148.2" fill="#c4c4c4"/><path d="M121 557 L160 557 L169 562 L169 604 L161 607 L135 607 L123 596 L118 591 L118 566 Z" fill="#8c8c8c"/></g>
<g filter="url(#blr1)"><path d="M126 561.8 L157 561.8 L163.8 566 L163.8 599.6 L159.6 602 L137 602 L127.7 592 L123.5 588.7 L123.5 568.5 Z" fill="#000"/></g>
<g fill="none" stroke="#707070" stroke-width="0.95" clip-path="url(#cp1)"><circle cx="104.4" cy="565.8" r="12.2"/><circle cx="127.6" cy="558.4" r="12.2"/><circle cx="151.6" cy="551.2" r="12.2"/><circle cx="169.7" cy="569.8" r="12.2"/><circle cx="97.3" cy="588.7" r="12.2"/><circle cx="120.9" cy="583.9" r="12.2"/><circle cx="144.6" cy="576.1" r="12.2"/><circle cx="91.0" cy="612.3" r="12.2"/><circle cx="114.6" cy="606.8" r="12.2"/><circle cx="187.1" cy="587.1" r="12.2"/><circle cx="179.2" cy="610.7" r="12.2"/><circle cx="107.6" cy="631.2" r="12.2"/><circle cx="171.3" cy="634.3" r="12.2"/><circle cx="194.9" cy="628.0" r="12.2"/><circle cx="124.1" cy="648.5" r="12.2"/><circle cx="149.3" cy="642.2" r="12.2"/><circle cx="164.2" cy="659.5" r="12.2"/></g>
<g fill="none" stroke="#8a8a8a" stroke-width="0.8" clip-path="url(#cp1)"><circle cx="104.4" cy="565.8" r="11.2"/><circle cx="127.6" cy="558.4" r="11.2"/><circle cx="151.6" cy="551.2" r="11.2"/><circle cx="169.7" cy="569.8" r="11.2"/><circle cx="97.3" cy="588.7" r="11.2"/><circle cx="120.9" cy="583.9" r="11.2"/><circle cx="144.6" cy="576.1" r="11.2"/><circle cx="91.0" cy="612.3" r="11.2"/><circle cx="114.6" cy="606.8" r="11.2"/><circle cx="187.1" cy="587.1" r="11.2"/><circle cx="179.2" cy="610.7" r="11.2"/><circle cx="107.6" cy="631.2" r="11.2"/><circle cx="171.3" cy="634.3" r="11.2"/><circle cx="194.9" cy="628.0" r="11.2"/><circle cx="124.1" cy="648.5" r="11.2"/><circle cx="149.3" cy="642.2" r="11.2"/><circle cx="164.2" cy="659.5" r="11.2"/></g>
<circle cx="161.9" cy="595.0" r="12.4" fill="none" stroke="#ff0000" stroke-width="1.9"/>
<circle cx="154.8" cy="618.3" r="12.4" fill="none" stroke="#00ff00" stroke-width="1.5"/>
<circle cx="131.5" cy="624.1" r="12.4" fill="none" stroke="#ffa500" stroke-width="1.5"/>
<circle cx="138.3" cy="601.3" r="12.4" fill="none" stroke="#0000ff" stroke-width="1.5"/>
<rect x="94.6" y="557.5" width="99.2" height="98.2" fill="none" stroke="#ff0000" stroke-width="1.2"/>
<text x="144.20" y="546.40" font-family='"Liberation Sans", sans-serif' font-size="11.2" fill="#ff0000" text-anchor="middle" >N</text>
<text x="80.00" y="610.70" font-family='"Liberation Sans", sans-serif' font-size="11.2" fill="#ff0000" text-anchor="middle" >E</text>
<path d="M141 605.8H148M144.5 602.3V609.3" stroke="#ff0000" stroke-width="1.2"/>
<rect x="69.7" y="532.6" width="148.6" height="148.2" fill="none" stroke="#222" stroke-width="1.1"/>
<line x1="78.56" y1="680.8" x2="78.56" y2="684.3" stroke="#222" stroke-width="1"/>
<text x="78.56" y="695.70" font-family='"Liberation Sans", sans-serif' font-size="10.6" fill="#000" text-anchor="middle" textLength="13.80" lengthAdjust="spacingAndGlyphs" >−4</text>
<line x1="66.2" y1="672.14" x2="69.7" y2="672.14" stroke="#222" stroke-width="1"/>
<text x="62.20" y="675.84" font-family='"Liberation Sans", sans-serif' font-size="10.6" fill="#000" text-anchor="end" textLength="13.80" lengthAdjust="spacingAndGlyphs" >−4</text>
<line x1="111.28" y1="680.8" x2="111.28" y2="684.3" stroke="#222" stroke-width="1"/>
<text x="111.28" y="695.70" font-family='"Liberation Sans", sans-serif' font-size="10.6" fill="#000" text-anchor="middle" textLength="13.80" lengthAdjust="spacingAndGlyphs" >−2</text>
<line x1="66.2" y1="639.42" x2="69.7" y2="639.42" stroke="#222" stroke-width="1"/>
<text x="62.20" y="643.12" font-family='"Liberation Sans", sans-serif' font-size="10.6" fill="#000" text-anchor="end" textLength="13.80" lengthAdjust="spacingAndGlyphs" >−2</text>
<line x1="144.00" y1="680.8" x2="144.00" y2="684.3" stroke="#222" stroke-width="1"/>
<text x="144.00" y="695.70" font-family='"Liberation Sans", sans-serif' font-size="10.6" fill="#000" text-anchor="middle" textLength="6.60" lengthAdjust="spacingAndGlyphs" >0</text>
<line x1="66.2" y1="606.70" x2="69.7" y2="606.70" stroke="#222" stroke-width="1"/>
<text x="62.20" y="610.40" font-family='"Liberation Sans", sans-serif' font-size="10.6" fill="#000" text-anchor="end" textLength="6.60" lengthAdjust="spacingAndGlyphs" >0</text>
<line x1="176.72" y1="680.8" x2="176.72" y2="684.3" stroke="#222" stroke-width="1"/>
<text x="176.72" y="695.70" font-family='"Liberation Sans", sans-serif' font-size="10.6" fill="#000" text-anchor="middle" textLength="6.60" lengthAdjust="spacingAndGlyphs" >2</text>
<line x1="66.2" y1="573.98" x2="69.7" y2="573.98" stroke="#222" stroke-width="1"/>
<text x="62.20" y="577.68" font-family='"Liberation Sans", sans-serif' font-size="10.6" fill="#000" text-anchor="end" textLength="6.60" lengthAdjust="spacingAndGlyphs" >2</text>
<line x1="209.44" y1="680.8" x2="209.44" y2="684.3" stroke="#222" stroke-width="1"/>
<text x="209.44" y="695.70" font-family='"Liberation Sans", sans-serif' font-size="10.6" fill="#000" text-anchor="middle" textLength="6.60" lengthAdjust="spacingAndGlyphs" >4</text>
<line x1="66.2" y1="541.26" x2="69.7" y2="541.26" stroke="#222" stroke-width="1"/>
<text x="62.20" y="544.96" font-family='"Liberation Sans", sans-serif' font-size="10.6" fill="#000" text-anchor="end" textLength="6.60" lengthAdjust="spacingAndGlyphs" >4</text>
<text x="144.00" y="706.40" font-family='"Liberation Sans", sans-serif' font-size="10.6" fill="#000" text-anchor="middle" textLength="41.00" lengthAdjust="spacingAndGlyphs" >arcsecs</text>
<text x="329.60" y="525.90" font-family='"Liberation Sans", sans-serif' font-size="12.6" fill="#000" text-anchor="middle" textLength="80.00" lengthAdjust="spacingAndGlyphs" >Lineflux Map</text>
<g clip-path="url(#cp2)"><g filter="url(#blr2)"><rect x="250.3" y="527.6" width="160" height="160" fill="#440154"/><polygon points="250,546 283,533 306,532 332,546 346,556 330,561 300,558 250,563" fill="#27808e"/><polygon points="338,528 368,528 374,550 392,562 360,561" fill="#2a788e"/><polygon points="394,528 410,528 410,545 393,600 385,600 394,560" fill="#2aa387"/><polygon points="370,556 394,560 388,606 372,606" fill="#33638d"/><polygon points="250,593 268,593 269,628 250,631" fill="#2e6e8e"/><polygon points="281,610 289,572 300,559 330,555 350,557 350,581 369,582 374,606 366,630 377,657 352,657 348,633 330,629 310,643 300,657 283,657 278,640" fill="#1f9e89"/><polygon points="284,640 290,578 298,560 326,558 360,600 360,626 330,628 304,640" fill="#5ec962"/><polygon points="292,634 297,588 302,573 321,572 329,596 346,598 349,618 330,618 305,630" fill="#fde725"/><polygon points="348,557 371,555 371,582 350,582" fill="#440154"/><polygon points="330,631 356,633 356,660 330,660" fill="#440154"/><polygon points="306,645 330,633 330,660 306,660" fill="#440154"/><polygon points="366,607 383,607 381,633 369,633" fill="#440154"/></g>
<polygon points="404,566 410,566 410,690 250,690 250,646.7 330,655.4 381,657 393,612" fill="#414487"/>
</g>
<rect x="279.9" y="557.5" width="99.2" height="98.2" fill="none" stroke="#ff0000" stroke-width="1.2"/>
<path d="M292.7 606.3H321.7M337.4 606.3H366.4M329.3 569.7V599.2M329.3 613.7V643.3" stroke="#ff0000" stroke-width="1.3"/>
<text x="329.30" y="546.40" font-family='"Liberation Sans", sans-serif' font-size="11.2" fill="#ff0000" text-anchor="middle" >N</text>
<text x="265.00" y="610.70" font-family='"Liberation Sans", sans-serif' font-size="11.2" fill="#ff0000" text-anchor="middle" >E</text>
<rect x="255.3" y="532.6" width="148.6" height="148.2" fill="none" stroke="#222" stroke-width="1.1"/>
<line x1="264.16" y1="680.8" x2="264.16" y2="684.3" stroke="#222" stroke-width="1"/>
<text x="264.16" y="695.70" font-family='"Liberation Sans", sans-serif' font-size="10.6" fill="#000" text-anchor="middle" textLength="13.80" lengthAdjust="spacingAndGlyphs" >−4</text>
<line x1="251.8" y1="672.14" x2="255.3" y2="672.14" stroke="#222" stroke-width="1"/>
<text x="247.80" y="675.84" font-family='"Liberation Sans", sans-serif' font-size="10.6" fill="#000" text-anchor="end" textLength="13.80" lengthAdjust="spacingAndGlyphs" >−4</text>
<line x1="296.88" y1="680.8" x2="296.88" y2="684.3" stroke="#222" stroke-width="1"/>
<text x="296.88" y="695.70" font-family='"Liberation Sans", sans-serif' font-size="10.6" fill="#000" text-anchor="middle" textLength="13.80" lengthAdjust="spacingAndGlyphs" >−2</text>
<line x1="251.8" y1="639.42" x2="255.3" y2="639.42" stroke="#222" stroke-width="1"/>
<text x="247.80" y="643.12" font-family='"Liberation Sans", sans-serif' font-size="10.6" fill="#000" text-anchor="end" textLength="13.80" lengthAdjust="spacingAndGlyphs" >−2</text>
<line x1="329.60" y1="680.8" x2="329.60" y2="684.3" stroke="#222" stroke-width="1"/>
<text x="329.60" y="695.70" font-family='"Liberation Sans", sans-serif' font-size="10.6" fill="#000" text-anchor="middle" textLength="6.60" lengthAdjust="spacingAndGlyphs" >0</text>
<line x1="251.8" y1="606.70" x2="255.3" y2="606.70" stroke="#222" stroke-width="1"/>
<text x="247.80" y="610.40" font-family='"Liberation Sans", sans-serif' font-size="10.6" fill="#000" text-anchor="end" textLength="6.60" lengthAdjust="spacingAndGlyphs" >0</text>
<line x1="362.32" y1="680.8" x2="362.32" y2="684.3" stroke="#222" stroke-width="1"/>
<text x="362.32" y="695.70" font-family='"Liberation Sans", sans-serif' font-size="10.6" fill="#000" text-anchor="middle" textLength="6.60" lengthAdjust="spacingAndGlyphs" >2</text>
<line x1="251.8" y1="573.98" x2="255.3" y2="573.98" stroke="#222" stroke-width="1"/>
<text x="247.80" y="577.68" font-family='"Liberation Sans", sans-serif' font-size="10.6" fill="#000" text-anchor="end" textLength="6.60" lengthAdjust="spacingAndGlyphs" >2</text>
<line x1="395.04" y1="680.8" x2="395.04" y2="684.3" stroke="#222" stroke-width="1"/>
<text x="395.04" y="695.70" font-family='"Liberation Sans", sans-serif' font-size="10.6" fill="#000" text-anchor="middle" textLength="6.60" lengthAdjust="spacingAndGlyphs" >4</text>
<line x1="251.8" y1="541.26" x2="255.3" y2="541.26" stroke="#222" stroke-width="1"/>
<text x="247.80" y="544.96" font-family='"Liberation Sans", sans-serif' font-size="10.6" fill="#000" text-anchor="end" textLength="6.60" lengthAdjust="spacingAndGlyphs" >4</text>
<text x="329.60" y="706.40" font-family='"Liberation Sans", sans-serif' font-size="10.6" fill="#000" text-anchor="middle" textLength="99.00" lengthAdjust="spacingAndGlyphs" >s/b: 2.29 +/- 0.124</text>
<text x="514.60" y="525.90" font-family='"Liberation Sans", sans-serif' font-size="12.6" fill="#000" text-anchor="middle" textLength="72.00" lengthAdjust="spacingAndGlyphs" >HSC(26.2) r</text>
<g filter="url(#fhsc3)"><rect x="440.9" y="532.6" width="147.7" height="148.2" fill="#c6c6c6"/><ellipse cx="515" cy="581" rx="29" ry="25" transform="rotate(40 515 581)" fill="#8a8a8a"/><ellipse cx="516" cy="602" rx="7" ry="7" fill="#9a9a9a"/></g>
<g filter="url(#blr1)"><ellipse cx="514.6" cy="581" rx="22.5" ry="19" transform="rotate(40 514.6 581)" fill="#000"/></g>
<ellipse cx="515.1" cy="581.5" rx="35.3" ry="36.5" transform="rotate(-30 515.1 581.5)" fill="none" stroke="#e6b820" stroke-width="1.4"/>
<rect x="508.6" y="574.3" width="13.6" height="13.6" fill="none" stroke="#0000ff" stroke-width="1.3"/>
<rect x="465.3" y="557.5" width="98.4" height="98.2" fill="none" stroke="#ff0000" stroke-width="1.2"/>
<path d="M477 606.3H506.1M521.8 606.3H551.8M514.8 569.8V599.7M514.8 613.9V644.5" stroke="#ff0000" stroke-width="1.3"/>
<text x="514.00" y="546.40" font-family='"Liberation Sans", sans-serif' font-size="11.2" fill="#ff0000" text-anchor="middle" >N</text>
<text x="450.70" y="610.70" font-family='"Liberation Sans", sans-serif' font-size="11.2" fill="#ff0000" text-anchor="middle" >E</text>
<rect x="440.9" y="532.6" width="147.7" height="148.2" fill="none" stroke="#222" stroke-width="1.1"/>
<line x1="449.16" y1="680.8" x2="449.16" y2="684.3" stroke="#222" stroke-width="1"/>
<text x="449.16" y="695.70" font-family='"Liberation Sans", sans-serif' font-size="10.6" fill="#000" text-anchor="middle" textLength="13.80" lengthAdjust="spacingAndGlyphs" >−4</text>
<line x1="437.4" y1="671.74" x2="440.9" y2="671.74" stroke="#222" stroke-width="1"/>
<text x="433.40" y="675.44" font-family='"Liberation Sans", sans-serif' font-size="10.6" fill="#000" text-anchor="end" textLength="13.80" lengthAdjust="spacingAndGlyphs" >−4</text>
<line x1="481.88" y1="680.8" x2="481.88" y2="684.3" stroke="#222" stroke-width="1"/>
<text x="481.88" y="695.70" font-family='"Liberation Sans", sans-serif' font-size="10.6" fill="#000" text-anchor="middle" textLength="13.80" lengthAdjust="spacingAndGlyphs" >−2</text>
<line x1="437.4" y1="639.02" x2="440.9" y2="639.02" stroke="#222" stroke-width="1"/>
<text x="433.40" y="642.72" font-family='"Liberation Sans", sans-serif' font-size="10.6" fill="#000" text-anchor="end" textLength="13.80" lengthAdjust="spacingAndGlyphs" >−2</text>
<line x1="514.60" y1="680.8" x2="514.60" y2="684.3" stroke="#222" stroke-width="1"/>
<text x="514.60" y="695.70" font-family='"Liberation Sans", sans-serif' font-size="10.6" fill="#000" text-anchor="middle" textLength="6.60" lengthAdjust="spacingAndGlyphs" >0</text>
<line x1="437.4" y1="606.30" x2="440.9" y2="606.30" stroke="#222" stroke-width="1"/>
<text x="433.40" y="610.00" font-family='"Liberation Sans", sans-serif' font-size="10.6" fill="#000" text-anchor="end" textLength="6.60" lengthAdjust="spacingAndGlyphs" >0</text>
<line x1="547.32" y1="680.8" x2="547.32" y2="684.3" stroke="#222" stroke-width="1"/>
<text x="547.32" y="695.70" font-family='"Liberation Sans", sans-serif' font-size="10.6" fill="#000" text-anchor="middle" textLength="6.60" lengthAdjust="spacingAndGlyphs" >2</text>
<line x1="437.4" y1="573.58" x2="440.9" y2="573.58" stroke="#222" stroke-width="1"/>
<text x="433.40" y="577.28" font-family='"Liberation Sans", sans-serif' font-size="10.6" fill="#000" text-anchor="end" textLength="6.60" lengthAdjust="spacingAndGlyphs" >2</text>
<line x1="580.04" y1="680.8" x2="580.04" y2="684.3" stroke="#222" stroke-width="1"/>
<text x="580.04" y="695.70" font-family='"Liberation Sans", sans-serif' font-size="10.6" fill="#000" text-anchor="middle" textLength="6.60" lengthAdjust="spacingAndGlyphs" >4</text>
<line x1="437.4" y1="540.86" x2="440.9" y2="540.86" stroke="#222" stroke-width="1"/>
<text x="433.40" y="544.56" font-family='"Liberation Sans", sans-serif' font-size="10.6" fill="#000" text-anchor="end" textLength="6.60" lengthAdjust="spacingAndGlyphs" >4</text>
<text x="514.60" y="706.00" font-family='"Liberation Sans", sans-serif' font-size="10.6" fill="#000" text-anchor="middle" textLength="107.00" lengthAdjust="spacingAndGlyphs" >m:19.8  re:2.2&quot;  s:1.5&quot;</text>
<text x="514.60" y="718.60" font-family='"Liberation Sans", sans-serif' font-size="10.6" fill="#000" text-anchor="middle" textLength="97.00" lengthAdjust="spacingAndGlyphs" >EWr: 1, PLAE: 0.022</text>
</svg></body></html>
